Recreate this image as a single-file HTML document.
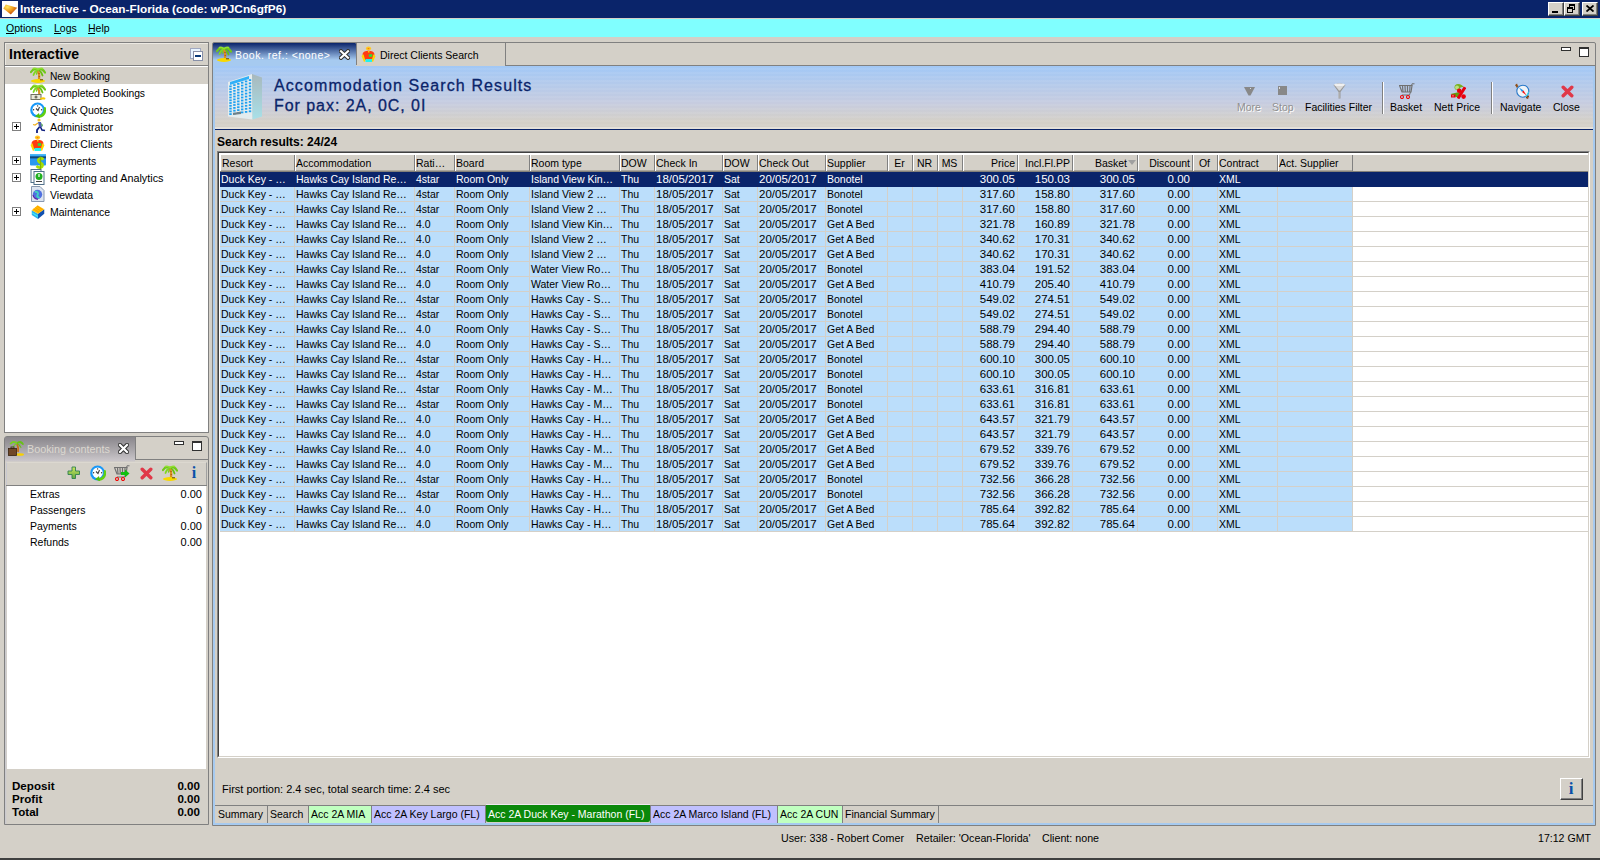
<!DOCTYPE html>
<html><head><meta charset="utf-8"><style>
html,body{margin:0;padding:0;}
body{width:1600px;height:860px;position:relative;overflow:hidden;background:#d4d0c8;font-family:"Liberation Sans", sans-serif;}
body>div,body>svg{position:absolute;}
.t{white-space:nowrap;}
</style></head><body>
<div style="left:0px;top:0px;width:1600px;height:18px;background:#0a246a"></div>
<div style="left:0px;top:18px;width:1600px;height:1px;background:#d4d0c8"></div>
<div style="left:2px;top:1px;width:16px;height:16px;background:#fff"></div>
<svg style="left:2px;top:1px" width="16" height="16" viewBox="0 0 16 16"><defs><radialGradient id="og" cx="0.3" cy="0.25" r="0.85"><stop offset="0" stop-color="#ffe860"/><stop offset="0.45" stop-color="#f0a020"/><stop offset="1" stop-color="#b83800"/></radialGradient></defs><path d="M1.3 7.5 L3.8 3.5 L15.2 6.8 L8.8 13.5 Z" fill="url(#og)"/></svg>
<div class="t" style="left:20px;top:-1px;font-size:11.8px;line-height:20px;color:#fff;font-weight:bold;">Interactive - Ocean-Florida (code: wPJCn6gfP6)</div>
<div style="left:1548px;top:2px;width:16px;height:14px;background:#d4d0c8;border-top:1px solid #fff;border-left:1px solid #fff;border-right:1px solid #404040;border-bottom:1px solid #404040;box-sizing:border-box;box-shadow:inset -1px -1px 0 #808080"></div>
<div style="left:1552px;top:11px;width:6px;height:2px;background:#000"></div>
<div style="left:1564px;top:2px;width:16px;height:14px;background:#d4d0c8;border-top:1px solid #fff;border-left:1px solid #fff;border-right:1px solid #404040;border-bottom:1px solid #404040;box-sizing:border-box;box-shadow:inset -1px -1px 0 #808080"></div>
<div style="left:1569px;top:4px;width:6px;height:6px;border:1px solid #000;border-top-width:2px;box-sizing:border-box"></div><div style="left:1567px;top:7px;width:6px;height:6px;border:1px solid #000;border-top-width:2px;box-sizing:border-box;background:#d4d0c8"></div>
<div style="left:1582px;top:2px;width:16px;height:14px;background:#d4d0c8;border-top:1px solid #fff;border-left:1px solid #fff;border-right:1px solid #404040;border-bottom:1px solid #404040;box-sizing:border-box;box-shadow:inset -1px -1px 0 #808080"></div>
<svg style="left:1586px;top:5px" width="8" height="7" viewBox="0 0 8 7"><path d="M0.5 0.5 L7.5 6.5 M7.5 0.5 L0.5 6.5" stroke="#000" stroke-width="1.8"/></svg>
<div style="left:0px;top:19px;width:1600px;height:18px;background:#80ffff"></div>
<div class="t" style="left:6px;top:18px;font-size:10.5px;line-height:20px;color:#000;">Options</div>
<div style="left:6px;top:33px;width:8px;height:1px;background:#000"></div>
<div class="t" style="left:54px;top:18px;font-size:10.5px;line-height:20px;color:#000;">Logs</div>
<div style="left:54px;top:33px;width:7px;height:1px;background:#000"></div>
<div class="t" style="left:88px;top:18px;font-size:10.5px;line-height:20px;color:#000;">Help</div>
<div style="left:88px;top:33px;width:7px;height:1px;background:#000"></div>
<div style="left:4px;top:42px;width:205px;height:391px;border:1px solid #808080;box-sizing:border-box;background:#d4d0c8"></div>
<div style="left:5px;top:43px;width:203px;height:1px;background:#ece9e2"></div>
<div style="left:5px;top:43px;width:1px;height:22px;background:#ece9e2"></div>
<div style="left:5px;top:65px;width:203px;height:1px;background:#808080"></div>
<div style="left:5px;top:66px;width:203px;height:366px;background:#fff"></div>
<div style="left:5px;top:67px;width:203px;height:17px;background:#d4d0c8"></div>
<div class="t" style="left:9px;top:44px;font-size:14px;line-height:20px;color:#000;font-weight:bold;">Interactive</div>
<div style="left:190px;top:48px;width:11px;height:11px;background:#e8f4ff;border:1px solid #a0a8c0;box-sizing:border-box"></div>
<div style="left:193px;top:51px;width:10px;height:10px;background:#fff;border:1px solid #8890a8;box-sizing:border-box"></div>
<div style="left:195px;top:55px;width:6px;height:2px;background:#0a3a7a"></div>
<div class="t" style="left:50px;top:67px;font-size:10.2px;line-height:20px;color:#000;">New Booking</div>
<svg style="left:30px;top:67px" width="16" height="16" viewBox="0 0 16 16"><g fill="none" stroke-linecap="round"><path d="M8 3 Q4 0.5 1 5" stroke="#70c818" stroke-width="2.2"/><path d="M8 3 Q12 0.5 15 5.5" stroke="#70c818" stroke-width="2.2"/><path d="M8 3.5 Q5 3.5 3.5 8" stroke="#80d820" stroke-width="1.8"/><path d="M8 3.5 Q11 3.5 12.5 8.5" stroke="#68c010" stroke-width="1.8"/><path d="M8 3 Q10 0.5 12.5 1.5" stroke="#90e030" stroke-width="1.6"/><path d="M8 3 Q6 0.5 3.5 1.5" stroke="#90e030" stroke-width="1.6"/><path d="M8 3.5 Q7 5 6.5 7" stroke="#78d020" stroke-width="1.4"/></g><path d="M8 4 Q9.8 7.5 9 13" stroke="#d89020" stroke-width="2.2" fill="none"/><path d="M8.6 6 L9.4 7 M8.8 9 L9.6 10" stroke="#a04810" stroke-width="1"/><ellipse cx="8" cy="14" rx="7" ry="1.9" fill="#f8d800"/><path d="M10 12.8 L13 12.8" stroke="#604010" stroke-width="1"/></svg>
<div class="t" style="left:50px;top:84px;font-size:10.3px;line-height:20px;color:#000;">Completed Bookings</div>
<svg style="left:30px;top:84px" width="16" height="16" viewBox="0 0 16 16"><g fill="none" stroke-linecap="round"><path d="M8 3 Q4 0.5 1 5" stroke="#70c818" stroke-width="2.2"/><path d="M8 3 Q12 0.5 15 5.5" stroke="#70c818" stroke-width="2.2"/><path d="M8 3.5 Q5 3.5 3.5 8" stroke="#80d820" stroke-width="1.8"/><path d="M8 3.5 Q11 3.5 12.5 8.5" stroke="#68c010" stroke-width="1.8"/><path d="M8 3 Q10 0.5 12.5 1.5" stroke="#90e030" stroke-width="1.6"/><path d="M8 3 Q6 0.5 3.5 1.5" stroke="#90e030" stroke-width="1.6"/><path d="M8 3.5 Q7 5 6.5 7" stroke="#78d020" stroke-width="1.4"/></g><path d="M8 4 Q9.8 7 9.3 11" stroke="#d89020" stroke-width="2.2" fill="none"/><rect x="1" y="10.5" width="10" height="5" fill="#e8e8d8" stroke="#707060" stroke-width="1"/><circle cx="6" cy="13" r="1.5" fill="#707060"/><path d="M10 14.5 Q13 12.5 15.5 14 L15 15.5 L10 15.5 Z" fill="#f8c800"/></svg>
<div class="t" style="left:50px;top:100px;font-size:10.5px;line-height:20px;color:#000;">Quick Quotes</div>
<svg style="left:30px;top:102px" width="16" height="16" viewBox="0 0 16 16"><circle cx="7.6" cy="8" r="7.4" fill="#1898f8"/><circle cx="7.6" cy="7.8" r="5.2" fill="#fff"/><circle cx="7.6" cy="3.9" r="0.7" fill="#303030"/><circle cx="3.6" cy="7.8" r="0.7" fill="#303030"/><circle cx="11.6" cy="7.8" r="0.7" fill="#303030"/><path d="M9.5 5 L8 8.5 L6 6.5" stroke="#404040" stroke-width="1.1" fill="none"/><path d="M6 13.5 Q11 14 13.5 10 L14 5 L16 5.5 L16 10 Q15 15 9 16 Z" fill="#60d010"/><path d="M5 14.5 L9 11 L10 16 Z" fill="#50c008"/></svg>
<div class="t" style="left:50px;top:117px;font-size:10.7px;line-height:20px;color:#000;">Administrator</div>
<div style="left:12px;top:122px;width:9px;height:9px;border:1px solid #808080;box-sizing:border-box;background:#fff"></div>
<div style="left:14px;top:126px;width:5px;height:1px;background:#000"></div>
<div style="left:16px;top:124px;width:1px;height:5px;background:#000"></div>
<svg style="left:30px;top:118px" width="16" height="16" viewBox="0 0 16 16"><circle cx="9" cy="2" r="1.6" fill="#f0c020"/><path d="M8 4 L11 4 L12 9 L9 9 Z" fill="#5060b0"/><path d="M11 5 L13 7 L12 9 Z" fill="#40a040"/><path d="M8 5 L5 7 L3 6.5" stroke="#f0b020" stroke-width="1.2" fill="none"/><path d="M9.5 9 L7 12 L7 15" stroke="#102080" stroke-width="1.8" fill="none"/><path d="M10.5 9 L12 12 L15 12.5" stroke="#102080" stroke-width="1.6" fill="none"/></svg>
<div class="t" style="left:50px;top:134px;font-size:10.5px;line-height:20px;color:#000;">Direct Clients</div>
<svg style="left:30px;top:135px" width="16" height="16" viewBox="0 0 16 16"><ellipse cx="7.5" cy="2.4" rx="2.6" ry="2" fill="#ffc820"/><ellipse cx="7.5" cy="2.6" rx="1" ry="0.6" fill="#ff7010"/><path d="M1.5 8 Q2.5 4.8 7.5 4.8 Q12.5 4.8 13.5 8 L12 14 L3 14 Z" fill="#ff3c10"/><path d="M0.5 10 L2.5 8.2 L4.5 15 L3 16 Z M14.5 10 L12.5 8.2 L10.5 15 L12 16 Z" fill="#ffd400"/><rect x="7.8" y="8.2" width="3.4" height="2.6" fill="#28e040"/><rect x="4.5" y="13" width="6.5" height="3" fill="#20f0f0"/><rect x="7" y="5" width="1.5" height="1.5" fill="#ffd000"/></svg>
<div class="t" style="left:50px;top:152px;font-size:10.4px;line-height:20px;color:#000;">Payments</div>
<div style="left:12px;top:156px;width:9px;height:9px;border:1px solid #808080;box-sizing:border-box;background:#fff"></div>
<div style="left:14px;top:160px;width:5px;height:1px;background:#000"></div>
<div style="left:16px;top:158px;width:1px;height:5px;background:#000"></div>
<svg style="left:30px;top:153px" width="16" height="16" viewBox="0 0 16 16"><rect x="0" y="1" width="16" height="11.5" rx="1" fill="#2898f0"/><rect x="0" y="1" width="16" height="1.6" fill="#48b8f8"/><rect x="0" y="3.4" width="16" height="2" fill="#104878"/><path d="M13.5 6.5 Q11.5 4.8 9.5 5.6 Q7.2 6.8 9 9 Q11.5 10 12.5 11.5 Q13 14.5 10 14.6 Q8 14.6 6.5 13" stroke="#a8e000" stroke-width="2.6" fill="none"/><path d="M10.5 3.6 L10.5 16" stroke="#80b800" stroke-width="1.3"/></svg>
<div class="t" style="left:50px;top:168px;font-size:10.8px;line-height:20px;color:#000;">Reporting and Analytics</div>
<div style="left:12px;top:173px;width:9px;height:9px;border:1px solid #808080;box-sizing:border-box;background:#fff"></div>
<div style="left:14px;top:177px;width:5px;height:1px;background:#000"></div>
<div style="left:16px;top:175px;width:1px;height:5px;background:#000"></div>
<svg style="left:30px;top:169px" width="16" height="16" viewBox="0 0 16 16"><rect x="1" y="0.5" width="10" height="13" fill="#fff" stroke="#50708a"/><rect x="4" y="2.5" width="10" height="13" fill="#fff" stroke="#50708a"/><circle cx="9" cy="7.5" r="3.5" fill="#20b020"/><rect x="8.4" y="5" width="1.2" height="3" fill="#fff"/><rect x="6" y="12" width="6" height="1" fill="#404040"/></svg>
<div class="t" style="left:50px;top:185px;font-size:10.5px;line-height:20px;color:#000;">Viewdata</div>
<svg style="left:30px;top:186px" width="16" height="16" viewBox="0 0 16 16"><path d="M1.5 0.5 L10 0.5 L14 4.5 L14 15.5 L1.5 15.5 Z" fill="#dce4f0" stroke="#8898b0"/><circle cx="7.5" cy="8.5" r="4.7" fill="#5070e0"/><path d="M5 6 C7 5 9 7 7.5 9 C6.5 10.5 8.5 12 9.5 11" stroke="#40d0c0" stroke-width="2" fill="none"/><path d="M3 9 C3.5 12 6 13.5 8 13.2" stroke="#6020a0" stroke-width="1.2" fill="none"/></svg>
<div class="t" style="left:50px;top:202px;font-size:10.5px;line-height:20px;color:#000;">Maintenance</div>
<div style="left:12px;top:207px;width:9px;height:9px;border:1px solid #808080;box-sizing:border-box;background:#fff"></div>
<div style="left:14px;top:211px;width:5px;height:1px;background:#000"></div>
<div style="left:16px;top:209px;width:1px;height:5px;background:#000"></div>
<svg style="left:30px;top:204px" width="16" height="16" viewBox="0 1 16 18"><path d="M1 8 L8 12 L8 18 L1 13.5 Z" fill="#30b0e8"/><path d="M8 12 L15 7 L15 12 L8 18 Z" fill="#1050b0"/><path d="M1 8 L7.5 2.5 L15 7 L8 12 Z" fill="#ffc000"/><path d="M3 6.5 L9.5 10.5 M5 5 L11.5 9 M7 3.5 L13.5 7.5" stroke="#ff9000" stroke-width="0.9"/><path d="M1.5 11 L8 15" stroke="#40f0f8" stroke-width="1.2"/></svg>
<div style="left:4px;top:436px;width:205px;height:389px;border:1px solid #808080;box-sizing:border-box;background:#d4d0c8;border-radius:3px 3px 0 0"></div>
<div style="left:5px;top:437px;width:130px;height:25px;background:linear-gradient(#8a878c,#a9a6aa 50%,#cac6ca 95%,#d4d0c8)"></div>
<div style="left:135px;top:437px;width:1px;height:23px;background:#808080"></div>
<div style="left:135px;top:459px;width:73px;height:1px;background:#808080"></div>
<div class="t" style="left:27px;top:439px;font-size:10.8px;line-height:20px;color:#dcd8d0;">Booking contents</div>
<svg style="left:8px;top:440px" width="17" height="17" viewBox="0 0 17 17"><path d="M9 3 C10 6 10.5 9 10 12" stroke="#c87018" stroke-width="1.8" fill="none"/><path d="M9 2 C6 0 3 1 1.5 4 L3 4.5 C4 3 6 2.5 8 3.5 C6 4 5 6 4.5 7.5 L6 7 C6.5 5.5 7.5 4.5 9 4 Z" fill="#78d020"/><path d="M9 2 C12 0 15 1 16 4.5 L14.5 5 C13.5 3.5 12 3 10 3.5 C12 4.5 13 6 13.5 8 L12 7.5 C11.5 6 10.5 4.5 9 4 Z" fill="#68c018"/><ellipse cx="12" cy="14.5" rx="4" ry="1.3" fill="#f8d000"/><rect x="0.5" y="8.5" width="8" height="7" fill="#704828" stroke="#3a2410" stroke-width="0.8"/><rect x="3" y="7" width="3" height="1.5" fill="none" stroke="#3a2410" stroke-width="0.8"/></svg>
<svg style="left:118px;top:443px" width="11" height="11" viewBox="0 0 11 11"><path d="M2 2 L9 9 M9 2 L2 9" stroke="#303030" stroke-width="4.2" stroke-linecap="square"/><path d="M2 2 L9 9 M9 2 L2 9" stroke="#fff" stroke-width="2.2" stroke-linecap="square"/></svg>
<div style="left:174px;top:441px;width:10px;height:4px;border:1px solid #303030;background:#fff;box-sizing:border-box"></div>
<div style="left:192px;top:441px;width:10px;height:10px;border:1px solid #303030;border-top-width:2px;background:#fff;box-sizing:border-box"></div>
<div style="left:6px;top:462px;width:201px;height:23px;background:#d4d0c8;border-left:1px solid #c8c8d0;border-top:1px solid #dcd8d0;border-right:1px solid #a0a0a0;box-sizing:border-box"></div>
<div style="left:6px;top:485px;width:201px;height:1px;background:#808080"></div>
<svg style="left:67px;top:466px" width="14" height="14" viewBox="0 0 14 14"><defs><linearGradient id="pg" x1="0" y1="0" x2="0" y2="1"><stop offset="0" stop-color="#d0e860"/><stop offset="1" stop-color="#60a840"/></linearGradient></defs><path d="M5 1 L8.5 1 L8.5 5 L12.5 5 L12.5 8.5 L8.5 8.5 L8.5 12.5 L5 12.5 L5 8.5 L1 8.5 L1 5 L5 5 Z" fill="url(#pg)" stroke="#308050" stroke-width="0.9"/></svg>
<svg style="left:90px;top:465px" width="16" height="16" viewBox="0 0 16 16"><circle cx="7.6" cy="8" r="7.4" fill="#1898f8"/><circle cx="7.6" cy="7.8" r="5.2" fill="#fff"/><circle cx="7.6" cy="3.9" r="0.7" fill="#303030"/><circle cx="3.6" cy="7.8" r="0.7" fill="#303030"/><circle cx="11.6" cy="7.8" r="0.7" fill="#303030"/><path d="M9.5 5 L8 8.5 L6 6.5" stroke="#404040" stroke-width="1.1" fill="none"/><path d="M6 13.5 Q11 14 13.5 10 L14 5 L16 5.5 L16 10 Q15 15 9 16 Z" fill="#60d010"/><path d="M5 14.5 L9 11 L10 16 Z" fill="#50c008"/></svg>
<svg style="left:114px;top:465px" width="16" height="16" viewBox="0 0 16 16"><path d="M0.5 2.5 L13 2.5 L12 9 L3 9 Z" fill="none" stroke="#707070" stroke-width="1.2"/><path d="M3.5 3 L4 9 M6 3 L6.3 9 M8.5 3 L8.5 9 M11 3 L10.7 9" stroke="#707070" stroke-width="1.2"/><path d="M12.5 3 L13 0.8 L15.5 0.8 M11.5 9 L10.5 12 L3 12" stroke="#707070" stroke-width="1" fill="none"/><circle cx="3" cy="14" r="1.5" fill="none" stroke="#f00000" stroke-width="1.1"/><circle cx="9" cy="14" r="1.5" fill="none" stroke="#f00000" stroke-width="1.1"/><path d="M7 7 L11 7 L11 4.5 L15.5 8.5 L11 12.5 L11 10 L7 10 Z" fill="#10c010"/></svg>
<svg style="left:140px;top:467px" width="13" height="13" viewBox="0 0 13 13"><path d="M2.2 2.2 L10.8 10.8 M10.8 2.2 L2.2 10.8" stroke="#e03848" stroke-width="3.4" stroke-linecap="round"/></svg>
<svg style="left:162px;top:465px" width="16" height="16" viewBox="0 0 16 16"><g fill="none" stroke-linecap="round"><path d="M8 3 Q4 0.5 1 5" stroke="#70c818" stroke-width="2.2"/><path d="M8 3 Q12 0.5 15 5.5" stroke="#70c818" stroke-width="2.2"/><path d="M8 3.5 Q5 3.5 3.5 8" stroke="#80d820" stroke-width="1.8"/><path d="M8 3.5 Q11 3.5 12.5 8.5" stroke="#68c010" stroke-width="1.8"/><path d="M8 3 Q10 0.5 12.5 1.5" stroke="#90e030" stroke-width="1.6"/><path d="M8 3 Q6 0.5 3.5 1.5" stroke="#90e030" stroke-width="1.6"/><path d="M8 3.5 Q7 5 6.5 7" stroke="#78d020" stroke-width="1.4"/></g><path d="M8 4 Q9.8 7.5 9 13" stroke="#d89020" stroke-width="2.2" fill="none"/><path d="M8.6 6 L9.4 7 M8.8 9 L9.6 10" stroke="#a04810" stroke-width="1"/><ellipse cx="8" cy="14" rx="7" ry="1.9" fill="#f8d800"/><path d="M10 12.8 L13 12.8" stroke="#604010" stroke-width="1"/></svg>
<div class="t" style="left:-6px;width:400px;text-align:center;top:463px;font-size:16px;line-height:20px;color:#0a50a8;font-weight:bold;font-family:'Liberation Serif',serif">i</div>
<div style="left:7px;top:486px;width:199px;height:283px;background:#fff"></div>
<div style="left:5px;top:486px;width:2px;height:338px;background:linear-gradient(90deg,#c8c8d0,#d4d0c8)"></div>
<div class="t" style="left:30px;top:484px;font-size:10.5px;line-height:20px;color:#000;">Extras</div>
<div class="t" style="left:-198px;width:400px;text-align:right;top:484px;font-size:11px;line-height:20px;color:#000;">0.00</div>
<div class="t" style="left:30px;top:500px;font-size:10.5px;line-height:20px;color:#000;">Passengers</div>
<div class="t" style="left:-198px;width:400px;text-align:right;top:500px;font-size:11px;line-height:20px;color:#000;">0</div>
<div class="t" style="left:30px;top:516px;font-size:10.5px;line-height:20px;color:#000;">Payments</div>
<div class="t" style="left:-198px;width:400px;text-align:right;top:516px;font-size:11px;line-height:20px;color:#000;">0.00</div>
<div class="t" style="left:30px;top:532px;font-size:10.5px;line-height:20px;color:#000;">Refunds</div>
<div class="t" style="left:-198px;width:400px;text-align:right;top:532px;font-size:11px;line-height:20px;color:#000;">0.00</div>
<div class="t" style="left:12px;top:776px;font-size:11.6px;line-height:20px;color:#000;font-weight:bold;">Deposit</div>
<div class="t" style="left:-200px;width:400px;text-align:right;top:776px;font-size:11.6px;line-height:20px;color:#000;font-weight:bold;">0.00</div>
<div class="t" style="left:12px;top:789px;font-size:11.6px;line-height:20px;color:#000;font-weight:bold;">Profit</div>
<div class="t" style="left:-200px;width:400px;text-align:right;top:789px;font-size:11.6px;line-height:20px;color:#000;font-weight:bold;">0.00</div>
<div class="t" style="left:12px;top:802px;font-size:11.6px;line-height:20px;color:#000;font-weight:bold;">Total</div>
<div class="t" style="left:-200px;width:400px;text-align:right;top:802px;font-size:11.6px;line-height:20px;color:#000;font-weight:bold;">0.00</div>
<div style="left:212px;top:42px;width:1384px;height:784px;border:1px solid #808080;box-sizing:border-box;background:#d4d0c8;border-radius:2px 2px 0 0"></div>
<div style="left:505px;top:65px;width:1090px;height:1px;background:#808080"></div>
<div style="left:356px;top:43px;width:150px;height:22px;background:#d4d0c8;border-left:1px solid #808080;border-right:1px solid #808080;box-sizing:border-box"></div>
<div class="t" style="left:380px;top:45px;font-size:10.5px;line-height:20px;color:#000;">Direct Clients Search</div>
<svg style="left:361px;top:46px" width="16" height="16" viewBox="0 0 16 16"><ellipse cx="7.5" cy="2.4" rx="2.6" ry="2" fill="#ffc820"/><ellipse cx="7.5" cy="2.6" rx="1" ry="0.6" fill="#ff7010"/><path d="M1.5 8 Q2.5 4.8 7.5 4.8 Q12.5 4.8 13.5 8 L12 14 L3 14 Z" fill="#ff3c10"/><path d="M0.5 10 L2.5 8.2 L4.5 15 L3 16 Z M14.5 10 L12.5 8.2 L10.5 15 L12 16 Z" fill="#ffd400"/><rect x="7.8" y="8.2" width="3.4" height="2.6" fill="#28e040"/><rect x="4.5" y="13" width="6.5" height="3" fill="#20f0f0"/><rect x="7" y="5" width="1.5" height="1.5" fill="#ffd000"/></svg>
<div style="left:213px;top:66px;width:1382px;height:759px;border:2px solid #a6caf0;box-sizing:border-box"></div>
<div style="left:215px;top:66px;width:1378px;height:63px;background:linear-gradient(#a2c8f6 0%,#c6cce0 58%,#d4d0c8 88%)"></div>
<div style="left:215px;top:127px;width:1378px;height:2px;background:#e4e0d8"></div>
<div style="left:215px;top:66px;width:1378px;height:63px;background:repeating-linear-gradient(rgba(255,255,255,0) 0px,rgba(255,255,255,0) 2px,rgba(255,255,255,0.06) 2px,rgba(255,255,255,0.06) 4px)"></div>
<div style="left:215px;top:129px;width:1378px;height:1px;background:#0a246a"></div>
<div style="left:213px;top:43px;width:143px;height:23px;background:linear-gradient(#0a246a 0%,#a6caf0 74%,#a6caf0 100%);border-radius:1px 1px 0 0"></div>
<div class="t" style="left:235px;top:45px;font-size:10.5px;line-height:20px;color:#fff;letter-spacing:0.5px">Book. ref.: &lt;none&gt;</div>
<svg style="left:216px;top:46px" width="16" height="16" viewBox="0 0 16 16"><g fill="none" stroke-linecap="round"><path d="M8 3 Q4 0.5 1 5" stroke="#70c818" stroke-width="2.2"/><path d="M8 3 Q12 0.5 15 5.5" stroke="#70c818" stroke-width="2.2"/><path d="M8 3.5 Q5 3.5 3.5 8" stroke="#80d820" stroke-width="1.8"/><path d="M8 3.5 Q11 3.5 12.5 8.5" stroke="#68c010" stroke-width="1.8"/><path d="M8 3 Q10 0.5 12.5 1.5" stroke="#90e030" stroke-width="1.6"/><path d="M8 3 Q6 0.5 3.5 1.5" stroke="#90e030" stroke-width="1.6"/><path d="M8 3.5 Q7 5 6.5 7" stroke="#78d020" stroke-width="1.4"/></g><path d="M8 4 Q9.8 7.5 9 13" stroke="#d89020" stroke-width="2.2" fill="none"/><path d="M8.6 6 L9.4 7 M8.8 9 L9.6 10" stroke="#a04810" stroke-width="1"/><ellipse cx="8" cy="14" rx="7" ry="1.9" fill="#f8d800"/><path d="M10 12.8 L13 12.8" stroke="#604010" stroke-width="1"/></svg>
<svg style="left:339px;top:49px" width="11" height="11" viewBox="0 0 11 10.5"><path d="M2 2 L9 8.5 M9 2 L2 8.5" stroke="#303030" stroke-width="4.2" stroke-linecap="square"/><path d="M2 2 L9 8.5 M9 2 L2 8.5" stroke="#fff" stroke-width="2.2" stroke-linecap="square"/></svg>
<div style="left:1561px;top:47px;width:10px;height:4px;border:1px solid #303030;background:#fff;box-sizing:border-box"></div>
<div style="left:1579px;top:47px;width:10px;height:10px;border:1px solid #303030;border-top-width:2px;background:#fff;box-sizing:border-box"></div>
<svg style="left:227px;top:73px" width="36" height="47" viewBox="0 0 36 47"><defs><linearGradient id="bside" x1="0" y1="0" x2="0" y2="1"><stop offset="0" stop-color="#a8b8bc"/><stop offset="1" stop-color="#a8e0e8"/></linearGradient></defs><path d="M1 9 L25 1 L25.5 46.5 L1 43.5 Z" fill="#e4ecee"/><path d="M25 1 L35 4.5 L35 43.5 L25.5 46.5 Z" fill="url(#bside)"/><path d="M3 9 L22 3 L22 6 L3 12 Z" fill="#30b0f8"/><rect x="2.3" y="12.5" width="2.4" height="1.8" fill="#1ea0f0"/><rect x="2.3" y="15.3" width="2.4" height="1.8" fill="#1ea0f0"/><rect x="2.3" y="18.0" width="2.4" height="1.8" fill="#1ea0f0"/><rect x="2.3" y="20.8" width="2.4" height="1.8" fill="#1ea0f0"/><rect x="2.3" y="23.6" width="2.4" height="1.8" fill="#1ea0f0"/><rect x="2.3" y="26.4" width="2.4" height="1.8" fill="#1ea0f0"/><rect x="2.3" y="29.1" width="2.4" height="1.8" fill="#1ea0f0"/><rect x="2.3" y="31.9" width="2.4" height="1.8" fill="#1ea0f0"/><rect x="2.3" y="34.7" width="2.4" height="1.8" fill="#1ea0f0"/><rect x="2.3" y="37.5" width="2.4" height="1.8" fill="#1ea0f0"/><rect x="2.3" y="40.2" width="2.4" height="1.8" fill="#1ea0f0"/><rect x="6.2" y="11.2" width="2.4" height="1.8" fill="#1ea0f0"/><rect x="6.2" y="14.1" width="2.4" height="1.8" fill="#1ea0f0"/><rect x="6.2" y="16.9" width="2.4" height="1.8" fill="#1ea0f0"/><rect x="6.2" y="19.8" width="2.4" height="1.8" fill="#1ea0f0"/><rect x="6.2" y="22.6" width="2.4" height="1.8" fill="#1ea0f0"/><rect x="6.2" y="25.5" width="2.4" height="1.8" fill="#1ea0f0"/><rect x="6.2" y="28.3" width="2.4" height="1.8" fill="#1ea0f0"/><rect x="6.2" y="31.1" width="2.4" height="1.8" fill="#1ea0f0"/><rect x="6.2" y="34.0" width="2.4" height="1.8" fill="#1ea0f0"/><rect x="6.2" y="36.8" width="2.4" height="1.8" fill="#1ea0f0"/><rect x="6.2" y="39.7" width="2.4" height="1.8" fill="#1ea0f0"/><rect x="10.1" y="10.0" width="2.4" height="1.8" fill="#1ea0f0"/><rect x="10.1" y="12.9" width="2.4" height="1.8" fill="#1ea0f0"/><rect x="10.1" y="15.8" width="2.4" height="1.8" fill="#1ea0f0"/><rect x="10.1" y="18.7" width="2.4" height="1.8" fill="#1ea0f0"/><rect x="10.1" y="21.6" width="2.4" height="1.8" fill="#1ea0f0"/><rect x="10.1" y="24.5" width="2.4" height="1.8" fill="#1ea0f0"/><rect x="10.1" y="27.5" width="2.4" height="1.8" fill="#1ea0f0"/><rect x="10.1" y="30.4" width="2.4" height="1.8" fill="#1ea0f0"/><rect x="10.1" y="33.3" width="2.4" height="1.8" fill="#1ea0f0"/><rect x="10.1" y="36.2" width="2.4" height="1.8" fill="#1ea0f0"/><rect x="10.1" y="39.1" width="2.4" height="1.8" fill="#1ea0f0"/><rect x="14.0" y="8.8" width="2.4" height="1.8" fill="#1ea0f0"/><rect x="14.0" y="11.7" width="2.4" height="1.8" fill="#1ea0f0"/><rect x="14.0" y="14.7" width="2.4" height="1.8" fill="#1ea0f0"/><rect x="14.0" y="17.7" width="2.4" height="1.8" fill="#1ea0f0"/><rect x="14.0" y="20.7" width="2.4" height="1.8" fill="#1ea0f0"/><rect x="14.0" y="23.6" width="2.4" height="1.8" fill="#1ea0f0"/><rect x="14.0" y="26.6" width="2.4" height="1.8" fill="#1ea0f0"/><rect x="14.0" y="29.6" width="2.4" height="1.8" fill="#1ea0f0"/><rect x="14.0" y="32.6" width="2.4" height="1.8" fill="#1ea0f0"/><rect x="14.0" y="35.5" width="2.4" height="1.8" fill="#1ea0f0"/><rect x="14.0" y="38.5" width="2.4" height="1.8" fill="#1ea0f0"/><rect x="17.9" y="7.5" width="2.4" height="1.8" fill="#1ea0f0"/><rect x="17.9" y="10.5" width="2.4" height="1.8" fill="#1ea0f0"/><rect x="17.9" y="13.6" width="2.4" height="1.8" fill="#1ea0f0"/><rect x="17.9" y="16.6" width="2.4" height="1.8" fill="#1ea0f0"/><rect x="17.9" y="19.7" width="2.4" height="1.8" fill="#1ea0f0"/><rect x="17.9" y="22.7" width="2.4" height="1.8" fill="#1ea0f0"/><rect x="17.9" y="25.8" width="2.4" height="1.8" fill="#1ea0f0"/><rect x="17.9" y="28.8" width="2.4" height="1.8" fill="#1ea0f0"/><rect x="17.9" y="31.9" width="2.4" height="1.8" fill="#1ea0f0"/><rect x="17.9" y="34.9" width="2.4" height="1.8" fill="#1ea0f0"/><rect x="17.9" y="38.0" width="2.4" height="1.8" fill="#1ea0f0"/><rect x="21.8" y="6.2" width="2.4" height="1.8" fill="#1ea0f0"/><rect x="21.8" y="9.4" width="2.4" height="1.8" fill="#1ea0f0"/><rect x="21.8" y="12.5" width="2.4" height="1.8" fill="#1ea0f0"/><rect x="21.8" y="15.6" width="2.4" height="1.8" fill="#1ea0f0"/><rect x="21.8" y="18.7" width="2.4" height="1.8" fill="#1ea0f0"/><rect x="21.8" y="21.8" width="2.4" height="1.8" fill="#1ea0f0"/><rect x="21.8" y="24.9" width="2.4" height="1.8" fill="#1ea0f0"/><rect x="21.8" y="28.0" width="2.4" height="1.8" fill="#1ea0f0"/><rect x="21.8" y="31.2" width="2.4" height="1.8" fill="#1ea0f0"/><rect x="21.8" y="34.3" width="2.4" height="1.8" fill="#1ea0f0"/><rect x="21.8" y="37.4" width="2.4" height="1.8" fill="#1ea0f0"/><path d="M6 40 L14 38.5 L14 41 L6 42 Z" fill="#708088"/></svg>
<div class="t" style="left:274px;top:76px;font-size:16px;line-height:20px;color:#0a246a;letter-spacing:1.1px;-webkit-text-stroke:0.3px #0a246a">Accommodation Search Results</div>
<div class="t" style="left:274px;top:96px;font-size:16px;line-height:20px;color:#0a246a;letter-spacing:0.95px;-webkit-text-stroke:0.3px #0a246a">For pax: 2A, 0C, 0I</div>
<div class="t" style="left:1238px;top:98px;font-size:10.5px;line-height:20px;color:#fff;">More</div>
<div class="t" style="left:1237px;top:97px;font-size:10.5px;line-height:20px;color:#909090;">More</div>
<div class="t" style="left:1273px;top:98px;font-size:10.5px;line-height:20px;color:#fff;">Stop</div>
<div class="t" style="left:1272px;top:97px;font-size:10.5px;line-height:20px;color:#909090;">Stop</div>
<div class="t" style="left:1305px;top:97px;font-size:10.5px;line-height:20px;color:#000;">Facilities Filter</div>
<div class="t" style="left:1390px;top:97px;font-size:10.5px;line-height:20px;color:#000;">Basket</div>
<div class="t" style="left:1434px;top:97px;font-size:10.5px;line-height:20px;color:#000;">Nett Price</div>
<div class="t" style="left:1500px;top:97px;font-size:10.5px;line-height:20px;color:#000;">Navigate</div>
<div class="t" style="left:1553px;top:97px;font-size:10.5px;line-height:20px;color:#000;">Close</div>
<svg style="left:1244px;top:86px" width="11" height="10" viewBox="0 0 11 10"><path d="M0 1 L11 1 L6.5 9.5 L4.5 9.5 Z" fill="#888"/><rect x="6" y="2" width="1" height="1" fill="#ddd"/></svg>
<svg style="left:1278px;top:86px" width="9" height="9" viewBox="0 0 9 9"><rect x="0" y="0" width="9" height="9" fill="#888"/><rect x="1" y="1" width="1" height="2" fill="#ddd"/></svg>
<svg style="left:1333px;top:83px" width="13" height="16" viewBox="0 0 13 16"><path d="M0.5 2 C3 0 10 0 12.5 2 L7.5 9 L7.5 15.5 L5.5 15.5 L5.5 9 Z" fill="#989898"/><path d="M1.5 2 C4 1.2 9 1.2 11.5 2 L7 7.5 L6 7.5 Z" fill="#d8d8d8"/><ellipse cx="6.5" cy="1.8" rx="5.5" ry="1.2" fill="#f0f0f0"/><path d="M6 9 L6 15" stroke="#c8c8c8" stroke-width="0.8"/></svg>
<svg style="left:1399px;top:83px" width="16" height="16" viewBox="0 0 16 16"><path d="M0.5 2.5 L13 2.5 L12 9 L3 9 Z" fill="none" stroke="#707070" stroke-width="1.2"/><path d="M3.5 3 L4 9 M6 3 L6.3 9 M8.5 3 L8.5 9 M11 3 L10.7 9" stroke="#707070" stroke-width="1.2"/><path d="M12.5 3 L13 0.8 L15.5 0.8 M11.5 9 L10.5 12 L3 12" stroke="#707070" stroke-width="1" fill="none"/><circle cx="3" cy="14" r="1.5" fill="none" stroke="#f00000" stroke-width="1.1"/><circle cx="9" cy="14" r="1.5" fill="none" stroke="#f00000" stroke-width="1.1"/></svg>
<svg style="left:1450px;top:83px" width="16" height="16" viewBox="0 0 16 16"><path d="M9 6.5 Q11 3 14 4.5 Q12 1 8 1 Q4.5 1 4.5 4.5 Q4.5 7 8 7 Z" fill="#78b020"/><ellipse cx="7" cy="4.5" rx="2" ry="2" fill="#b8e080"/><path d="M0.5 11 L7 9.5 L10 9.5 L9 14 L6 14 Z" fill="#60a010"/><circle cx="9.2" cy="7.8" r="2.3" fill="#e8000e"/><circle cx="13.6" cy="13.6" r="2.3" fill="#e8000e"/><path d="M15 4.2 L8 15.5" stroke="#e8000e" stroke-width="3"/><rect x="1" y="11.5" width="4.5" height="3" fill="#e8000e"/><rect x="2" y="12.5" width="2" height="0.8" fill="#ffa0a0"/></svg>
<svg style="left:1514px;top:83px" width="16" height="16" viewBox="0 0 16 16"><path d="M1.5 2 L4 3.5 M2.5 0.8 L3 4.5" stroke="#905018" stroke-width="1.6"/><path d="M12 14.5 L15 13.5 M13.5 12 L13.5 15.8" stroke="#804010" stroke-width="1.6"/><circle cx="8.8" cy="8.2" r="6" fill="#f0f4f8" stroke="#2878c8" stroke-width="1.1"/><path d="M11.5 13.5 Q14 12 14.5 9" stroke="#30d8f0" stroke-width="1.2" fill="none"/><path d="M5 4.5 L9.5 7.5 L8 9 Z" fill="#1890e8"/><path d="M9.5 7.5 L12.5 12.5 L8 9 Z" fill="#f01010"/></svg>
<svg style="left:1561px;top:85px" width="13" height="13" viewBox="0 0 13 13"><path d="M2.2 2.2 L10.8 10.8 M10.8 2.2 L2.2 10.8" stroke="#e03848" stroke-width="3.4" stroke-linecap="round"/></svg>
<div style="left:1382px;top:82px;width:1px;height:32px;background:#808080"></div>
<div style="left:1383px;top:82px;width:1px;height:32px;background:#fff"></div>
<div style="left:1491px;top:82px;width:1px;height:32px;background:#808080"></div>
<div style="left:1492px;top:82px;width:1px;height:32px;background:#fff"></div>
<div class="t" style="left:217px;top:132px;font-size:12px;line-height:20px;color:#000;font-weight:bold;">Search results: 24/24</div>
<div style="left:217px;top:151px;width:1373px;height:607px;background:#fff;border-top:1px solid #808080;border-left:1px solid #808080;border-right:1px solid #fff;border-bottom:1px solid #fff;box-sizing:border-box"></div>
<div style="left:218px;top:152px;width:1371px;height:605px;border-top:1px solid #404040;border-left:1px solid #404040;border-right:1px solid #d4d0c8;border-bottom:1px solid #d4d0c8;box-sizing:border-box"></div>
<div style="left:220px;top:155px;width:1368px;height:16px;background:#d4d0c8"></div>
<div style="left:220px;top:170px;width:1368px;height:1px;background:#aaa69c"></div>
<div style="left:220px;top:171px;width:1368px;height:1px;background:#84817a"></div>
<div style="left:294px;top:155px;width:1px;height:16px;background:#808080"></div>
<div style="left:295px;top:155px;width:1px;height:16px;background:#fff"></div>
<div class="t" style="left:222px;top:153px;font-size:10.5px;line-height:20px;color:#000;">Resort</div>
<div style="left:414px;top:155px;width:1px;height:16px;background:#808080"></div>
<div style="left:415px;top:155px;width:1px;height:16px;background:#fff"></div>
<div class="t" style="left:296px;top:153px;font-size:10.5px;line-height:20px;color:#000;">Accommodation</div>
<div style="left:454px;top:155px;width:1px;height:16px;background:#808080"></div>
<div style="left:455px;top:155px;width:1px;height:16px;background:#fff"></div>
<div class="t" style="left:416px;top:153px;font-size:10.5px;line-height:20px;color:#000;">Rati…</div>
<div style="left:529px;top:155px;width:1px;height:16px;background:#808080"></div>
<div style="left:530px;top:155px;width:1px;height:16px;background:#fff"></div>
<div class="t" style="left:456px;top:153px;font-size:10.5px;line-height:20px;color:#000;">Board</div>
<div style="left:619px;top:155px;width:1px;height:16px;background:#808080"></div>
<div style="left:620px;top:155px;width:1px;height:16px;background:#fff"></div>
<div class="t" style="left:531px;top:153px;font-size:10.5px;line-height:20px;color:#000;">Room type</div>
<div style="left:654px;top:155px;width:1px;height:16px;background:#808080"></div>
<div style="left:655px;top:155px;width:1px;height:16px;background:#fff"></div>
<div class="t" style="left:621px;top:153px;font-size:10.5px;line-height:20px;color:#000;">DOW</div>
<div style="left:722px;top:155px;width:1px;height:16px;background:#808080"></div>
<div style="left:723px;top:155px;width:1px;height:16px;background:#fff"></div>
<div class="t" style="left:656px;top:153px;font-size:10.5px;line-height:20px;color:#000;">Check In</div>
<div style="left:757px;top:155px;width:1px;height:16px;background:#808080"></div>
<div style="left:758px;top:155px;width:1px;height:16px;background:#fff"></div>
<div class="t" style="left:724px;top:153px;font-size:10.5px;line-height:20px;color:#000;">DOW</div>
<div style="left:825px;top:155px;width:1px;height:16px;background:#808080"></div>
<div style="left:826px;top:155px;width:1px;height:16px;background:#fff"></div>
<div class="t" style="left:759px;top:153px;font-size:10.5px;line-height:20px;color:#000;">Check Out</div>
<div style="left:887px;top:155px;width:1px;height:16px;background:#808080"></div>
<div style="left:888px;top:155px;width:1px;height:16px;background:#fff"></div>
<div class="t" style="left:827px;top:153px;font-size:10.5px;line-height:20px;color:#000;">Supplier</div>
<div style="left:912px;top:155px;width:1px;height:16px;background:#808080"></div>
<div style="left:913px;top:155px;width:1px;height:16px;background:#fff"></div>
<div class="t" style="left:699.5px;width:400px;text-align:center;top:153px;font-size:10.5px;line-height:20px;color:#000;">Er</div>
<div style="left:937px;top:155px;width:1px;height:16px;background:#808080"></div>
<div style="left:938px;top:155px;width:1px;height:16px;background:#fff"></div>
<div class="t" style="left:724.5px;width:400px;text-align:center;top:153px;font-size:10.5px;line-height:20px;color:#000;">NR</div>
<div style="left:962px;top:155px;width:1px;height:16px;background:#808080"></div>
<div style="left:963px;top:155px;width:1px;height:16px;background:#fff"></div>
<div class="t" style="left:749.5px;width:400px;text-align:center;top:153px;font-size:10.5px;line-height:20px;color:#000;">MS</div>
<div style="left:1017px;top:155px;width:1px;height:16px;background:#808080"></div>
<div style="left:1018px;top:155px;width:1px;height:16px;background:#fff"></div>
<div class="t" style="left:615px;width:400px;text-align:right;top:153px;font-size:10.5px;line-height:20px;color:#000;">Price</div>
<div style="left:1072px;top:155px;width:1px;height:16px;background:#808080"></div>
<div style="left:1073px;top:155px;width:1px;height:16px;background:#fff"></div>
<div class="t" style="left:670px;width:400px;text-align:right;top:153px;font-size:10.5px;line-height:20px;color:#000;">Incl.Fl.PP</div>
<div style="left:1137px;top:155px;width:1px;height:16px;background:#808080"></div>
<div style="left:1138px;top:155px;width:1px;height:16px;background:#fff"></div>
<div class="t" style="left:727px;width:400px;text-align:right;top:153px;font-size:10.5px;line-height:20px;color:#000;">Basket</div>
<svg style="left:1128px;top:160px" width="8" height="5" viewBox="0 0 8 5"><path d="M0 0 L8 0 L4 5 Z" fill="#a0a0a0"/></svg>
<div style="left:1192px;top:155px;width:1px;height:16px;background:#808080"></div>
<div style="left:1193px;top:155px;width:1px;height:16px;background:#fff"></div>
<div class="t" style="left:790px;width:400px;text-align:right;top:153px;font-size:10.5px;line-height:20px;color:#000;">Discount</div>
<div style="left:1217px;top:155px;width:1px;height:16px;background:#808080"></div>
<div style="left:1218px;top:155px;width:1px;height:16px;background:#fff"></div>
<div class="t" style="left:1004.5px;width:400px;text-align:center;top:153px;font-size:10.5px;line-height:20px;color:#000;">Of</div>
<div style="left:1277px;top:155px;width:1px;height:16px;background:#808080"></div>
<div style="left:1278px;top:155px;width:1px;height:16px;background:#fff"></div>
<div class="t" style="left:1219px;top:153px;font-size:10.5px;line-height:20px;color:#000;">Contract</div>
<div style="left:1352px;top:155px;width:1px;height:16px;background:#808080"></div>
<div style="left:1353px;top:155px;width:1px;height:16px;background:#fff"></div>
<div class="t" style="left:1279px;top:153px;font-size:10.5px;line-height:20px;color:#000;">Act. Supplier</div>
<div style="left:220px;top:155px;width:1px;height:16px;background:#fff"></div>
<div style="left:1353px;top:155px;width:235px;height:16px;background:#d4d0c8"></div>
<div style="left:220px;top:172px;width:1133px;height:360px;background:#bbdefb"></div>
<div style="left:220px;top:186px;width:1368px;height:1px;background:#d4d0c8"></div>
<div style="left:220px;top:201px;width:1368px;height:1px;background:#d4d0c8"></div>
<div style="left:220px;top:216px;width:1368px;height:1px;background:#d4d0c8"></div>
<div style="left:220px;top:231px;width:1368px;height:1px;background:#d4d0c8"></div>
<div style="left:220px;top:246px;width:1368px;height:1px;background:#d4d0c8"></div>
<div style="left:220px;top:261px;width:1368px;height:1px;background:#d4d0c8"></div>
<div style="left:220px;top:276px;width:1368px;height:1px;background:#d4d0c8"></div>
<div style="left:220px;top:291px;width:1368px;height:1px;background:#d4d0c8"></div>
<div style="left:220px;top:306px;width:1368px;height:1px;background:#d4d0c8"></div>
<div style="left:220px;top:321px;width:1368px;height:1px;background:#d4d0c8"></div>
<div style="left:220px;top:336px;width:1368px;height:1px;background:#d4d0c8"></div>
<div style="left:220px;top:351px;width:1368px;height:1px;background:#d4d0c8"></div>
<div style="left:220px;top:366px;width:1368px;height:1px;background:#d4d0c8"></div>
<div style="left:220px;top:381px;width:1368px;height:1px;background:#d4d0c8"></div>
<div style="left:220px;top:396px;width:1368px;height:1px;background:#d4d0c8"></div>
<div style="left:220px;top:411px;width:1368px;height:1px;background:#d4d0c8"></div>
<div style="left:220px;top:426px;width:1368px;height:1px;background:#d4d0c8"></div>
<div style="left:220px;top:441px;width:1368px;height:1px;background:#d4d0c8"></div>
<div style="left:220px;top:456px;width:1368px;height:1px;background:#d4d0c8"></div>
<div style="left:220px;top:471px;width:1368px;height:1px;background:#d4d0c8"></div>
<div style="left:220px;top:486px;width:1368px;height:1px;background:#d4d0c8"></div>
<div style="left:220px;top:501px;width:1368px;height:1px;background:#d4d0c8"></div>
<div style="left:220px;top:516px;width:1368px;height:1px;background:#d4d0c8"></div>
<div style="left:220px;top:531px;width:1368px;height:1px;background:#d4d0c8"></div>
<div style="left:294px;top:172px;width:1px;height:360px;background:#d4d0c8"></div>
<div style="left:414px;top:172px;width:1px;height:360px;background:#d4d0c8"></div>
<div style="left:454px;top:172px;width:1px;height:360px;background:#d4d0c8"></div>
<div style="left:529px;top:172px;width:1px;height:360px;background:#d4d0c8"></div>
<div style="left:619px;top:172px;width:1px;height:360px;background:#d4d0c8"></div>
<div style="left:654px;top:172px;width:1px;height:360px;background:#d4d0c8"></div>
<div style="left:722px;top:172px;width:1px;height:360px;background:#d4d0c8"></div>
<div style="left:757px;top:172px;width:1px;height:360px;background:#d4d0c8"></div>
<div style="left:825px;top:172px;width:1px;height:360px;background:#d4d0c8"></div>
<div style="left:887px;top:172px;width:1px;height:360px;background:#d4d0c8"></div>
<div style="left:912px;top:172px;width:1px;height:360px;background:#d4d0c8"></div>
<div style="left:937px;top:172px;width:1px;height:360px;background:#d4d0c8"></div>
<div style="left:962px;top:172px;width:1px;height:360px;background:#d4d0c8"></div>
<div style="left:1017px;top:172px;width:1px;height:360px;background:#d4d0c8"></div>
<div style="left:1072px;top:172px;width:1px;height:360px;background:#d4d0c8"></div>
<div style="left:1137px;top:172px;width:1px;height:360px;background:#d4d0c8"></div>
<div style="left:1192px;top:172px;width:1px;height:360px;background:#d4d0c8"></div>
<div style="left:1217px;top:172px;width:1px;height:360px;background:#d4d0c8"></div>
<div style="left:1277px;top:172px;width:1px;height:360px;background:#d4d0c8"></div>
<div style="left:1352px;top:172px;width:1px;height:360px;background:#d4d0c8"></div>
<div style="left:220px;top:172px;width:1368px;height:15px;background:#0a246a"></div>
<div class="t" style="left:221px;top:169px;font-size:10.5px;line-height:20px;color:#fff;">Duck Key - …</div>
<div class="t" style="left:296px;top:169px;font-size:10.5px;line-height:20px;color:#fff;">Hawks Cay Island Re…</div>
<div class="t" style="left:416px;top:169px;font-size:10.5px;line-height:20px;color:#fff;">4star</div>
<div class="t" style="left:456px;top:169px;font-size:10.5px;line-height:20px;color:#fff;">Room Only</div>
<div class="t" style="left:531px;top:169px;font-size:10.5px;line-height:20px;color:#fff;">Island View Kin…</div>
<div class="t" style="left:621px;top:169px;font-size:10.5px;line-height:20px;color:#fff;">Thu</div>
<div class="t" style="left:656px;top:169px;font-size:11.5px;line-height:20px;color:#fff;">18/05/2017</div>
<div class="t" style="left:724px;top:169px;font-size:10.5px;line-height:20px;color:#fff;">Sat</div>
<div class="t" style="left:759px;top:169px;font-size:11.5px;line-height:20px;color:#fff;">20/05/2017</div>
<div class="t" style="left:827px;top:169px;font-size:10.5px;line-height:20px;color:#fff;">Bonotel</div>
<div class="t" style="left:615px;width:400px;text-align:right;top:169px;font-size:11.5px;line-height:20px;color:#fff;">300.05</div>
<div class="t" style="left:670px;width:400px;text-align:right;top:169px;font-size:11.5px;line-height:20px;color:#fff;">150.03</div>
<div class="t" style="left:735px;width:400px;text-align:right;top:169px;font-size:11.5px;line-height:20px;color:#fff;">300.05</div>
<div class="t" style="left:790px;width:400px;text-align:right;top:169px;font-size:11.5px;line-height:20px;color:#fff;">0.00</div>
<div class="t" style="left:1219px;top:169px;font-size:10.5px;line-height:20px;color:#fff;">XML</div>
<div class="t" style="left:221px;top:184px;font-size:10.5px;line-height:20px;color:#000;">Duck Key - …</div>
<div class="t" style="left:296px;top:184px;font-size:10.5px;line-height:20px;color:#000;">Hawks Cay Island Re…</div>
<div class="t" style="left:416px;top:184px;font-size:10.5px;line-height:20px;color:#000;">4star</div>
<div class="t" style="left:456px;top:184px;font-size:10.5px;line-height:20px;color:#000;">Room Only</div>
<div class="t" style="left:531px;top:184px;font-size:10.5px;line-height:20px;color:#000;">Island View 2 …</div>
<div class="t" style="left:621px;top:184px;font-size:10.5px;line-height:20px;color:#000;">Thu</div>
<div class="t" style="left:656px;top:184px;font-size:11.5px;line-height:20px;color:#000;">18/05/2017</div>
<div class="t" style="left:724px;top:184px;font-size:10.5px;line-height:20px;color:#000;">Sat</div>
<div class="t" style="left:759px;top:184px;font-size:11.5px;line-height:20px;color:#000;">20/05/2017</div>
<div class="t" style="left:827px;top:184px;font-size:10.5px;line-height:20px;color:#000;">Bonotel</div>
<div class="t" style="left:615px;width:400px;text-align:right;top:184px;font-size:11.5px;line-height:20px;color:#000;">317.60</div>
<div class="t" style="left:670px;width:400px;text-align:right;top:184px;font-size:11.5px;line-height:20px;color:#000;">158.80</div>
<div class="t" style="left:735px;width:400px;text-align:right;top:184px;font-size:11.5px;line-height:20px;color:#000;">317.60</div>
<div class="t" style="left:790px;width:400px;text-align:right;top:184px;font-size:11.5px;line-height:20px;color:#000;">0.00</div>
<div class="t" style="left:1219px;top:184px;font-size:10.5px;line-height:20px;color:#000;">XML</div>
<div class="t" style="left:221px;top:199px;font-size:10.5px;line-height:20px;color:#000;">Duck Key - …</div>
<div class="t" style="left:296px;top:199px;font-size:10.5px;line-height:20px;color:#000;">Hawks Cay Island Re…</div>
<div class="t" style="left:416px;top:199px;font-size:10.5px;line-height:20px;color:#000;">4star</div>
<div class="t" style="left:456px;top:199px;font-size:10.5px;line-height:20px;color:#000;">Room Only</div>
<div class="t" style="left:531px;top:199px;font-size:10.5px;line-height:20px;color:#000;">Island View 2 …</div>
<div class="t" style="left:621px;top:199px;font-size:10.5px;line-height:20px;color:#000;">Thu</div>
<div class="t" style="left:656px;top:199px;font-size:11.5px;line-height:20px;color:#000;">18/05/2017</div>
<div class="t" style="left:724px;top:199px;font-size:10.5px;line-height:20px;color:#000;">Sat</div>
<div class="t" style="left:759px;top:199px;font-size:11.5px;line-height:20px;color:#000;">20/05/2017</div>
<div class="t" style="left:827px;top:199px;font-size:10.5px;line-height:20px;color:#000;">Bonotel</div>
<div class="t" style="left:615px;width:400px;text-align:right;top:199px;font-size:11.5px;line-height:20px;color:#000;">317.60</div>
<div class="t" style="left:670px;width:400px;text-align:right;top:199px;font-size:11.5px;line-height:20px;color:#000;">158.80</div>
<div class="t" style="left:735px;width:400px;text-align:right;top:199px;font-size:11.5px;line-height:20px;color:#000;">317.60</div>
<div class="t" style="left:790px;width:400px;text-align:right;top:199px;font-size:11.5px;line-height:20px;color:#000;">0.00</div>
<div class="t" style="left:1219px;top:199px;font-size:10.5px;line-height:20px;color:#000;">XML</div>
<div class="t" style="left:221px;top:214px;font-size:10.5px;line-height:20px;color:#000;">Duck Key - …</div>
<div class="t" style="left:296px;top:214px;font-size:10.5px;line-height:20px;color:#000;">Hawks Cay Island Re…</div>
<div class="t" style="left:416px;top:214px;font-size:10.5px;line-height:20px;color:#000;">4.0</div>
<div class="t" style="left:456px;top:214px;font-size:10.5px;line-height:20px;color:#000;">Room Only</div>
<div class="t" style="left:531px;top:214px;font-size:10.5px;line-height:20px;color:#000;">Island View Kin…</div>
<div class="t" style="left:621px;top:214px;font-size:10.5px;line-height:20px;color:#000;">Thu</div>
<div class="t" style="left:656px;top:214px;font-size:11.5px;line-height:20px;color:#000;">18/05/2017</div>
<div class="t" style="left:724px;top:214px;font-size:10.5px;line-height:20px;color:#000;">Sat</div>
<div class="t" style="left:759px;top:214px;font-size:11.5px;line-height:20px;color:#000;">20/05/2017</div>
<div class="t" style="left:827px;top:214px;font-size:10.5px;line-height:20px;color:#000;">Get A Bed</div>
<div class="t" style="left:615px;width:400px;text-align:right;top:214px;font-size:11.5px;line-height:20px;color:#000;">321.78</div>
<div class="t" style="left:670px;width:400px;text-align:right;top:214px;font-size:11.5px;line-height:20px;color:#000;">160.89</div>
<div class="t" style="left:735px;width:400px;text-align:right;top:214px;font-size:11.5px;line-height:20px;color:#000;">321.78</div>
<div class="t" style="left:790px;width:400px;text-align:right;top:214px;font-size:11.5px;line-height:20px;color:#000;">0.00</div>
<div class="t" style="left:1219px;top:214px;font-size:10.5px;line-height:20px;color:#000;">XML</div>
<div class="t" style="left:221px;top:229px;font-size:10.5px;line-height:20px;color:#000;">Duck Key - …</div>
<div class="t" style="left:296px;top:229px;font-size:10.5px;line-height:20px;color:#000;">Hawks Cay Island Re…</div>
<div class="t" style="left:416px;top:229px;font-size:10.5px;line-height:20px;color:#000;">4.0</div>
<div class="t" style="left:456px;top:229px;font-size:10.5px;line-height:20px;color:#000;">Room Only</div>
<div class="t" style="left:531px;top:229px;font-size:10.5px;line-height:20px;color:#000;">Island View 2 …</div>
<div class="t" style="left:621px;top:229px;font-size:10.5px;line-height:20px;color:#000;">Thu</div>
<div class="t" style="left:656px;top:229px;font-size:11.5px;line-height:20px;color:#000;">18/05/2017</div>
<div class="t" style="left:724px;top:229px;font-size:10.5px;line-height:20px;color:#000;">Sat</div>
<div class="t" style="left:759px;top:229px;font-size:11.5px;line-height:20px;color:#000;">20/05/2017</div>
<div class="t" style="left:827px;top:229px;font-size:10.5px;line-height:20px;color:#000;">Get A Bed</div>
<div class="t" style="left:615px;width:400px;text-align:right;top:229px;font-size:11.5px;line-height:20px;color:#000;">340.62</div>
<div class="t" style="left:670px;width:400px;text-align:right;top:229px;font-size:11.5px;line-height:20px;color:#000;">170.31</div>
<div class="t" style="left:735px;width:400px;text-align:right;top:229px;font-size:11.5px;line-height:20px;color:#000;">340.62</div>
<div class="t" style="left:790px;width:400px;text-align:right;top:229px;font-size:11.5px;line-height:20px;color:#000;">0.00</div>
<div class="t" style="left:1219px;top:229px;font-size:10.5px;line-height:20px;color:#000;">XML</div>
<div class="t" style="left:221px;top:244px;font-size:10.5px;line-height:20px;color:#000;">Duck Key - …</div>
<div class="t" style="left:296px;top:244px;font-size:10.5px;line-height:20px;color:#000;">Hawks Cay Island Re…</div>
<div class="t" style="left:416px;top:244px;font-size:10.5px;line-height:20px;color:#000;">4.0</div>
<div class="t" style="left:456px;top:244px;font-size:10.5px;line-height:20px;color:#000;">Room Only</div>
<div class="t" style="left:531px;top:244px;font-size:10.5px;line-height:20px;color:#000;">Island View 2 …</div>
<div class="t" style="left:621px;top:244px;font-size:10.5px;line-height:20px;color:#000;">Thu</div>
<div class="t" style="left:656px;top:244px;font-size:11.5px;line-height:20px;color:#000;">18/05/2017</div>
<div class="t" style="left:724px;top:244px;font-size:10.5px;line-height:20px;color:#000;">Sat</div>
<div class="t" style="left:759px;top:244px;font-size:11.5px;line-height:20px;color:#000;">20/05/2017</div>
<div class="t" style="left:827px;top:244px;font-size:10.5px;line-height:20px;color:#000;">Get A Bed</div>
<div class="t" style="left:615px;width:400px;text-align:right;top:244px;font-size:11.5px;line-height:20px;color:#000;">340.62</div>
<div class="t" style="left:670px;width:400px;text-align:right;top:244px;font-size:11.5px;line-height:20px;color:#000;">170.31</div>
<div class="t" style="left:735px;width:400px;text-align:right;top:244px;font-size:11.5px;line-height:20px;color:#000;">340.62</div>
<div class="t" style="left:790px;width:400px;text-align:right;top:244px;font-size:11.5px;line-height:20px;color:#000;">0.00</div>
<div class="t" style="left:1219px;top:244px;font-size:10.5px;line-height:20px;color:#000;">XML</div>
<div class="t" style="left:221px;top:259px;font-size:10.5px;line-height:20px;color:#000;">Duck Key - …</div>
<div class="t" style="left:296px;top:259px;font-size:10.5px;line-height:20px;color:#000;">Hawks Cay Island Re…</div>
<div class="t" style="left:416px;top:259px;font-size:10.5px;line-height:20px;color:#000;">4star</div>
<div class="t" style="left:456px;top:259px;font-size:10.5px;line-height:20px;color:#000;">Room Only</div>
<div class="t" style="left:531px;top:259px;font-size:10.5px;line-height:20px;color:#000;">Water View Ro…</div>
<div class="t" style="left:621px;top:259px;font-size:10.5px;line-height:20px;color:#000;">Thu</div>
<div class="t" style="left:656px;top:259px;font-size:11.5px;line-height:20px;color:#000;">18/05/2017</div>
<div class="t" style="left:724px;top:259px;font-size:10.5px;line-height:20px;color:#000;">Sat</div>
<div class="t" style="left:759px;top:259px;font-size:11.5px;line-height:20px;color:#000;">20/05/2017</div>
<div class="t" style="left:827px;top:259px;font-size:10.5px;line-height:20px;color:#000;">Bonotel</div>
<div class="t" style="left:615px;width:400px;text-align:right;top:259px;font-size:11.5px;line-height:20px;color:#000;">383.04</div>
<div class="t" style="left:670px;width:400px;text-align:right;top:259px;font-size:11.5px;line-height:20px;color:#000;">191.52</div>
<div class="t" style="left:735px;width:400px;text-align:right;top:259px;font-size:11.5px;line-height:20px;color:#000;">383.04</div>
<div class="t" style="left:790px;width:400px;text-align:right;top:259px;font-size:11.5px;line-height:20px;color:#000;">0.00</div>
<div class="t" style="left:1219px;top:259px;font-size:10.5px;line-height:20px;color:#000;">XML</div>
<div class="t" style="left:221px;top:274px;font-size:10.5px;line-height:20px;color:#000;">Duck Key - …</div>
<div class="t" style="left:296px;top:274px;font-size:10.5px;line-height:20px;color:#000;">Hawks Cay Island Re…</div>
<div class="t" style="left:416px;top:274px;font-size:10.5px;line-height:20px;color:#000;">4.0</div>
<div class="t" style="left:456px;top:274px;font-size:10.5px;line-height:20px;color:#000;">Room Only</div>
<div class="t" style="left:531px;top:274px;font-size:10.5px;line-height:20px;color:#000;">Water View Ro…</div>
<div class="t" style="left:621px;top:274px;font-size:10.5px;line-height:20px;color:#000;">Thu</div>
<div class="t" style="left:656px;top:274px;font-size:11.5px;line-height:20px;color:#000;">18/05/2017</div>
<div class="t" style="left:724px;top:274px;font-size:10.5px;line-height:20px;color:#000;">Sat</div>
<div class="t" style="left:759px;top:274px;font-size:11.5px;line-height:20px;color:#000;">20/05/2017</div>
<div class="t" style="left:827px;top:274px;font-size:10.5px;line-height:20px;color:#000;">Get A Bed</div>
<div class="t" style="left:615px;width:400px;text-align:right;top:274px;font-size:11.5px;line-height:20px;color:#000;">410.79</div>
<div class="t" style="left:670px;width:400px;text-align:right;top:274px;font-size:11.5px;line-height:20px;color:#000;">205.40</div>
<div class="t" style="left:735px;width:400px;text-align:right;top:274px;font-size:11.5px;line-height:20px;color:#000;">410.79</div>
<div class="t" style="left:790px;width:400px;text-align:right;top:274px;font-size:11.5px;line-height:20px;color:#000;">0.00</div>
<div class="t" style="left:1219px;top:274px;font-size:10.5px;line-height:20px;color:#000;">XML</div>
<div class="t" style="left:221px;top:289px;font-size:10.5px;line-height:20px;color:#000;">Duck Key - …</div>
<div class="t" style="left:296px;top:289px;font-size:10.5px;line-height:20px;color:#000;">Hawks Cay Island Re…</div>
<div class="t" style="left:416px;top:289px;font-size:10.5px;line-height:20px;color:#000;">4star</div>
<div class="t" style="left:456px;top:289px;font-size:10.5px;line-height:20px;color:#000;">Room Only</div>
<div class="t" style="left:531px;top:289px;font-size:10.5px;line-height:20px;color:#000;">Hawks Cay - S…</div>
<div class="t" style="left:621px;top:289px;font-size:10.5px;line-height:20px;color:#000;">Thu</div>
<div class="t" style="left:656px;top:289px;font-size:11.5px;line-height:20px;color:#000;">18/05/2017</div>
<div class="t" style="left:724px;top:289px;font-size:10.5px;line-height:20px;color:#000;">Sat</div>
<div class="t" style="left:759px;top:289px;font-size:11.5px;line-height:20px;color:#000;">20/05/2017</div>
<div class="t" style="left:827px;top:289px;font-size:10.5px;line-height:20px;color:#000;">Bonotel</div>
<div class="t" style="left:615px;width:400px;text-align:right;top:289px;font-size:11.5px;line-height:20px;color:#000;">549.02</div>
<div class="t" style="left:670px;width:400px;text-align:right;top:289px;font-size:11.5px;line-height:20px;color:#000;">274.51</div>
<div class="t" style="left:735px;width:400px;text-align:right;top:289px;font-size:11.5px;line-height:20px;color:#000;">549.02</div>
<div class="t" style="left:790px;width:400px;text-align:right;top:289px;font-size:11.5px;line-height:20px;color:#000;">0.00</div>
<div class="t" style="left:1219px;top:289px;font-size:10.5px;line-height:20px;color:#000;">XML</div>
<div class="t" style="left:221px;top:304px;font-size:10.5px;line-height:20px;color:#000;">Duck Key - …</div>
<div class="t" style="left:296px;top:304px;font-size:10.5px;line-height:20px;color:#000;">Hawks Cay Island Re…</div>
<div class="t" style="left:416px;top:304px;font-size:10.5px;line-height:20px;color:#000;">4star</div>
<div class="t" style="left:456px;top:304px;font-size:10.5px;line-height:20px;color:#000;">Room Only</div>
<div class="t" style="left:531px;top:304px;font-size:10.5px;line-height:20px;color:#000;">Hawks Cay - S…</div>
<div class="t" style="left:621px;top:304px;font-size:10.5px;line-height:20px;color:#000;">Thu</div>
<div class="t" style="left:656px;top:304px;font-size:11.5px;line-height:20px;color:#000;">18/05/2017</div>
<div class="t" style="left:724px;top:304px;font-size:10.5px;line-height:20px;color:#000;">Sat</div>
<div class="t" style="left:759px;top:304px;font-size:11.5px;line-height:20px;color:#000;">20/05/2017</div>
<div class="t" style="left:827px;top:304px;font-size:10.5px;line-height:20px;color:#000;">Bonotel</div>
<div class="t" style="left:615px;width:400px;text-align:right;top:304px;font-size:11.5px;line-height:20px;color:#000;">549.02</div>
<div class="t" style="left:670px;width:400px;text-align:right;top:304px;font-size:11.5px;line-height:20px;color:#000;">274.51</div>
<div class="t" style="left:735px;width:400px;text-align:right;top:304px;font-size:11.5px;line-height:20px;color:#000;">549.02</div>
<div class="t" style="left:790px;width:400px;text-align:right;top:304px;font-size:11.5px;line-height:20px;color:#000;">0.00</div>
<div class="t" style="left:1219px;top:304px;font-size:10.5px;line-height:20px;color:#000;">XML</div>
<div class="t" style="left:221px;top:319px;font-size:10.5px;line-height:20px;color:#000;">Duck Key - …</div>
<div class="t" style="left:296px;top:319px;font-size:10.5px;line-height:20px;color:#000;">Hawks Cay Island Re…</div>
<div class="t" style="left:416px;top:319px;font-size:10.5px;line-height:20px;color:#000;">4.0</div>
<div class="t" style="left:456px;top:319px;font-size:10.5px;line-height:20px;color:#000;">Room Only</div>
<div class="t" style="left:531px;top:319px;font-size:10.5px;line-height:20px;color:#000;">Hawks Cay - S…</div>
<div class="t" style="left:621px;top:319px;font-size:10.5px;line-height:20px;color:#000;">Thu</div>
<div class="t" style="left:656px;top:319px;font-size:11.5px;line-height:20px;color:#000;">18/05/2017</div>
<div class="t" style="left:724px;top:319px;font-size:10.5px;line-height:20px;color:#000;">Sat</div>
<div class="t" style="left:759px;top:319px;font-size:11.5px;line-height:20px;color:#000;">20/05/2017</div>
<div class="t" style="left:827px;top:319px;font-size:10.5px;line-height:20px;color:#000;">Get A Bed</div>
<div class="t" style="left:615px;width:400px;text-align:right;top:319px;font-size:11.5px;line-height:20px;color:#000;">588.79</div>
<div class="t" style="left:670px;width:400px;text-align:right;top:319px;font-size:11.5px;line-height:20px;color:#000;">294.40</div>
<div class="t" style="left:735px;width:400px;text-align:right;top:319px;font-size:11.5px;line-height:20px;color:#000;">588.79</div>
<div class="t" style="left:790px;width:400px;text-align:right;top:319px;font-size:11.5px;line-height:20px;color:#000;">0.00</div>
<div class="t" style="left:1219px;top:319px;font-size:10.5px;line-height:20px;color:#000;">XML</div>
<div class="t" style="left:221px;top:334px;font-size:10.5px;line-height:20px;color:#000;">Duck Key - …</div>
<div class="t" style="left:296px;top:334px;font-size:10.5px;line-height:20px;color:#000;">Hawks Cay Island Re…</div>
<div class="t" style="left:416px;top:334px;font-size:10.5px;line-height:20px;color:#000;">4.0</div>
<div class="t" style="left:456px;top:334px;font-size:10.5px;line-height:20px;color:#000;">Room Only</div>
<div class="t" style="left:531px;top:334px;font-size:10.5px;line-height:20px;color:#000;">Hawks Cay - S…</div>
<div class="t" style="left:621px;top:334px;font-size:10.5px;line-height:20px;color:#000;">Thu</div>
<div class="t" style="left:656px;top:334px;font-size:11.5px;line-height:20px;color:#000;">18/05/2017</div>
<div class="t" style="left:724px;top:334px;font-size:10.5px;line-height:20px;color:#000;">Sat</div>
<div class="t" style="left:759px;top:334px;font-size:11.5px;line-height:20px;color:#000;">20/05/2017</div>
<div class="t" style="left:827px;top:334px;font-size:10.5px;line-height:20px;color:#000;">Get A Bed</div>
<div class="t" style="left:615px;width:400px;text-align:right;top:334px;font-size:11.5px;line-height:20px;color:#000;">588.79</div>
<div class="t" style="left:670px;width:400px;text-align:right;top:334px;font-size:11.5px;line-height:20px;color:#000;">294.40</div>
<div class="t" style="left:735px;width:400px;text-align:right;top:334px;font-size:11.5px;line-height:20px;color:#000;">588.79</div>
<div class="t" style="left:790px;width:400px;text-align:right;top:334px;font-size:11.5px;line-height:20px;color:#000;">0.00</div>
<div class="t" style="left:1219px;top:334px;font-size:10.5px;line-height:20px;color:#000;">XML</div>
<div class="t" style="left:221px;top:349px;font-size:10.5px;line-height:20px;color:#000;">Duck Key - …</div>
<div class="t" style="left:296px;top:349px;font-size:10.5px;line-height:20px;color:#000;">Hawks Cay Island Re…</div>
<div class="t" style="left:416px;top:349px;font-size:10.5px;line-height:20px;color:#000;">4star</div>
<div class="t" style="left:456px;top:349px;font-size:10.5px;line-height:20px;color:#000;">Room Only</div>
<div class="t" style="left:531px;top:349px;font-size:10.5px;line-height:20px;color:#000;">Hawks Cay - H…</div>
<div class="t" style="left:621px;top:349px;font-size:10.5px;line-height:20px;color:#000;">Thu</div>
<div class="t" style="left:656px;top:349px;font-size:11.5px;line-height:20px;color:#000;">18/05/2017</div>
<div class="t" style="left:724px;top:349px;font-size:10.5px;line-height:20px;color:#000;">Sat</div>
<div class="t" style="left:759px;top:349px;font-size:11.5px;line-height:20px;color:#000;">20/05/2017</div>
<div class="t" style="left:827px;top:349px;font-size:10.5px;line-height:20px;color:#000;">Bonotel</div>
<div class="t" style="left:615px;width:400px;text-align:right;top:349px;font-size:11.5px;line-height:20px;color:#000;">600.10</div>
<div class="t" style="left:670px;width:400px;text-align:right;top:349px;font-size:11.5px;line-height:20px;color:#000;">300.05</div>
<div class="t" style="left:735px;width:400px;text-align:right;top:349px;font-size:11.5px;line-height:20px;color:#000;">600.10</div>
<div class="t" style="left:790px;width:400px;text-align:right;top:349px;font-size:11.5px;line-height:20px;color:#000;">0.00</div>
<div class="t" style="left:1219px;top:349px;font-size:10.5px;line-height:20px;color:#000;">XML</div>
<div class="t" style="left:221px;top:364px;font-size:10.5px;line-height:20px;color:#000;">Duck Key - …</div>
<div class="t" style="left:296px;top:364px;font-size:10.5px;line-height:20px;color:#000;">Hawks Cay Island Re…</div>
<div class="t" style="left:416px;top:364px;font-size:10.5px;line-height:20px;color:#000;">4star</div>
<div class="t" style="left:456px;top:364px;font-size:10.5px;line-height:20px;color:#000;">Room Only</div>
<div class="t" style="left:531px;top:364px;font-size:10.5px;line-height:20px;color:#000;">Hawks Cay - H…</div>
<div class="t" style="left:621px;top:364px;font-size:10.5px;line-height:20px;color:#000;">Thu</div>
<div class="t" style="left:656px;top:364px;font-size:11.5px;line-height:20px;color:#000;">18/05/2017</div>
<div class="t" style="left:724px;top:364px;font-size:10.5px;line-height:20px;color:#000;">Sat</div>
<div class="t" style="left:759px;top:364px;font-size:11.5px;line-height:20px;color:#000;">20/05/2017</div>
<div class="t" style="left:827px;top:364px;font-size:10.5px;line-height:20px;color:#000;">Bonotel</div>
<div class="t" style="left:615px;width:400px;text-align:right;top:364px;font-size:11.5px;line-height:20px;color:#000;">600.10</div>
<div class="t" style="left:670px;width:400px;text-align:right;top:364px;font-size:11.5px;line-height:20px;color:#000;">300.05</div>
<div class="t" style="left:735px;width:400px;text-align:right;top:364px;font-size:11.5px;line-height:20px;color:#000;">600.10</div>
<div class="t" style="left:790px;width:400px;text-align:right;top:364px;font-size:11.5px;line-height:20px;color:#000;">0.00</div>
<div class="t" style="left:1219px;top:364px;font-size:10.5px;line-height:20px;color:#000;">XML</div>
<div class="t" style="left:221px;top:379px;font-size:10.5px;line-height:20px;color:#000;">Duck Key - …</div>
<div class="t" style="left:296px;top:379px;font-size:10.5px;line-height:20px;color:#000;">Hawks Cay Island Re…</div>
<div class="t" style="left:416px;top:379px;font-size:10.5px;line-height:20px;color:#000;">4star</div>
<div class="t" style="left:456px;top:379px;font-size:10.5px;line-height:20px;color:#000;">Room Only</div>
<div class="t" style="left:531px;top:379px;font-size:10.5px;line-height:20px;color:#000;">Hawks Cay - M…</div>
<div class="t" style="left:621px;top:379px;font-size:10.5px;line-height:20px;color:#000;">Thu</div>
<div class="t" style="left:656px;top:379px;font-size:11.5px;line-height:20px;color:#000;">18/05/2017</div>
<div class="t" style="left:724px;top:379px;font-size:10.5px;line-height:20px;color:#000;">Sat</div>
<div class="t" style="left:759px;top:379px;font-size:11.5px;line-height:20px;color:#000;">20/05/2017</div>
<div class="t" style="left:827px;top:379px;font-size:10.5px;line-height:20px;color:#000;">Bonotel</div>
<div class="t" style="left:615px;width:400px;text-align:right;top:379px;font-size:11.5px;line-height:20px;color:#000;">633.61</div>
<div class="t" style="left:670px;width:400px;text-align:right;top:379px;font-size:11.5px;line-height:20px;color:#000;">316.81</div>
<div class="t" style="left:735px;width:400px;text-align:right;top:379px;font-size:11.5px;line-height:20px;color:#000;">633.61</div>
<div class="t" style="left:790px;width:400px;text-align:right;top:379px;font-size:11.5px;line-height:20px;color:#000;">0.00</div>
<div class="t" style="left:1219px;top:379px;font-size:10.5px;line-height:20px;color:#000;">XML</div>
<div class="t" style="left:221px;top:394px;font-size:10.5px;line-height:20px;color:#000;">Duck Key - …</div>
<div class="t" style="left:296px;top:394px;font-size:10.5px;line-height:20px;color:#000;">Hawks Cay Island Re…</div>
<div class="t" style="left:416px;top:394px;font-size:10.5px;line-height:20px;color:#000;">4star</div>
<div class="t" style="left:456px;top:394px;font-size:10.5px;line-height:20px;color:#000;">Room Only</div>
<div class="t" style="left:531px;top:394px;font-size:10.5px;line-height:20px;color:#000;">Hawks Cay - M…</div>
<div class="t" style="left:621px;top:394px;font-size:10.5px;line-height:20px;color:#000;">Thu</div>
<div class="t" style="left:656px;top:394px;font-size:11.5px;line-height:20px;color:#000;">18/05/2017</div>
<div class="t" style="left:724px;top:394px;font-size:10.5px;line-height:20px;color:#000;">Sat</div>
<div class="t" style="left:759px;top:394px;font-size:11.5px;line-height:20px;color:#000;">20/05/2017</div>
<div class="t" style="left:827px;top:394px;font-size:10.5px;line-height:20px;color:#000;">Bonotel</div>
<div class="t" style="left:615px;width:400px;text-align:right;top:394px;font-size:11.5px;line-height:20px;color:#000;">633.61</div>
<div class="t" style="left:670px;width:400px;text-align:right;top:394px;font-size:11.5px;line-height:20px;color:#000;">316.81</div>
<div class="t" style="left:735px;width:400px;text-align:right;top:394px;font-size:11.5px;line-height:20px;color:#000;">633.61</div>
<div class="t" style="left:790px;width:400px;text-align:right;top:394px;font-size:11.5px;line-height:20px;color:#000;">0.00</div>
<div class="t" style="left:1219px;top:394px;font-size:10.5px;line-height:20px;color:#000;">XML</div>
<div class="t" style="left:221px;top:409px;font-size:10.5px;line-height:20px;color:#000;">Duck Key - …</div>
<div class="t" style="left:296px;top:409px;font-size:10.5px;line-height:20px;color:#000;">Hawks Cay Island Re…</div>
<div class="t" style="left:416px;top:409px;font-size:10.5px;line-height:20px;color:#000;">4.0</div>
<div class="t" style="left:456px;top:409px;font-size:10.5px;line-height:20px;color:#000;">Room Only</div>
<div class="t" style="left:531px;top:409px;font-size:10.5px;line-height:20px;color:#000;">Hawks Cay - H…</div>
<div class="t" style="left:621px;top:409px;font-size:10.5px;line-height:20px;color:#000;">Thu</div>
<div class="t" style="left:656px;top:409px;font-size:11.5px;line-height:20px;color:#000;">18/05/2017</div>
<div class="t" style="left:724px;top:409px;font-size:10.5px;line-height:20px;color:#000;">Sat</div>
<div class="t" style="left:759px;top:409px;font-size:11.5px;line-height:20px;color:#000;">20/05/2017</div>
<div class="t" style="left:827px;top:409px;font-size:10.5px;line-height:20px;color:#000;">Get A Bed</div>
<div class="t" style="left:615px;width:400px;text-align:right;top:409px;font-size:11.5px;line-height:20px;color:#000;">643.57</div>
<div class="t" style="left:670px;width:400px;text-align:right;top:409px;font-size:11.5px;line-height:20px;color:#000;">321.79</div>
<div class="t" style="left:735px;width:400px;text-align:right;top:409px;font-size:11.5px;line-height:20px;color:#000;">643.57</div>
<div class="t" style="left:790px;width:400px;text-align:right;top:409px;font-size:11.5px;line-height:20px;color:#000;">0.00</div>
<div class="t" style="left:1219px;top:409px;font-size:10.5px;line-height:20px;color:#000;">XML</div>
<div class="t" style="left:221px;top:424px;font-size:10.5px;line-height:20px;color:#000;">Duck Key - …</div>
<div class="t" style="left:296px;top:424px;font-size:10.5px;line-height:20px;color:#000;">Hawks Cay Island Re…</div>
<div class="t" style="left:416px;top:424px;font-size:10.5px;line-height:20px;color:#000;">4.0</div>
<div class="t" style="left:456px;top:424px;font-size:10.5px;line-height:20px;color:#000;">Room Only</div>
<div class="t" style="left:531px;top:424px;font-size:10.5px;line-height:20px;color:#000;">Hawks Cay - H…</div>
<div class="t" style="left:621px;top:424px;font-size:10.5px;line-height:20px;color:#000;">Thu</div>
<div class="t" style="left:656px;top:424px;font-size:11.5px;line-height:20px;color:#000;">18/05/2017</div>
<div class="t" style="left:724px;top:424px;font-size:10.5px;line-height:20px;color:#000;">Sat</div>
<div class="t" style="left:759px;top:424px;font-size:11.5px;line-height:20px;color:#000;">20/05/2017</div>
<div class="t" style="left:827px;top:424px;font-size:10.5px;line-height:20px;color:#000;">Get A Bed</div>
<div class="t" style="left:615px;width:400px;text-align:right;top:424px;font-size:11.5px;line-height:20px;color:#000;">643.57</div>
<div class="t" style="left:670px;width:400px;text-align:right;top:424px;font-size:11.5px;line-height:20px;color:#000;">321.79</div>
<div class="t" style="left:735px;width:400px;text-align:right;top:424px;font-size:11.5px;line-height:20px;color:#000;">643.57</div>
<div class="t" style="left:790px;width:400px;text-align:right;top:424px;font-size:11.5px;line-height:20px;color:#000;">0.00</div>
<div class="t" style="left:1219px;top:424px;font-size:10.5px;line-height:20px;color:#000;">XML</div>
<div class="t" style="left:221px;top:439px;font-size:10.5px;line-height:20px;color:#000;">Duck Key - …</div>
<div class="t" style="left:296px;top:439px;font-size:10.5px;line-height:20px;color:#000;">Hawks Cay Island Re…</div>
<div class="t" style="left:416px;top:439px;font-size:10.5px;line-height:20px;color:#000;">4.0</div>
<div class="t" style="left:456px;top:439px;font-size:10.5px;line-height:20px;color:#000;">Room Only</div>
<div class="t" style="left:531px;top:439px;font-size:10.5px;line-height:20px;color:#000;">Hawks Cay - M…</div>
<div class="t" style="left:621px;top:439px;font-size:10.5px;line-height:20px;color:#000;">Thu</div>
<div class="t" style="left:656px;top:439px;font-size:11.5px;line-height:20px;color:#000;">18/05/2017</div>
<div class="t" style="left:724px;top:439px;font-size:10.5px;line-height:20px;color:#000;">Sat</div>
<div class="t" style="left:759px;top:439px;font-size:11.5px;line-height:20px;color:#000;">20/05/2017</div>
<div class="t" style="left:827px;top:439px;font-size:10.5px;line-height:20px;color:#000;">Get A Bed</div>
<div class="t" style="left:615px;width:400px;text-align:right;top:439px;font-size:11.5px;line-height:20px;color:#000;">679.52</div>
<div class="t" style="left:670px;width:400px;text-align:right;top:439px;font-size:11.5px;line-height:20px;color:#000;">339.76</div>
<div class="t" style="left:735px;width:400px;text-align:right;top:439px;font-size:11.5px;line-height:20px;color:#000;">679.52</div>
<div class="t" style="left:790px;width:400px;text-align:right;top:439px;font-size:11.5px;line-height:20px;color:#000;">0.00</div>
<div class="t" style="left:1219px;top:439px;font-size:10.5px;line-height:20px;color:#000;">XML</div>
<div class="t" style="left:221px;top:454px;font-size:10.5px;line-height:20px;color:#000;">Duck Key - …</div>
<div class="t" style="left:296px;top:454px;font-size:10.5px;line-height:20px;color:#000;">Hawks Cay Island Re…</div>
<div class="t" style="left:416px;top:454px;font-size:10.5px;line-height:20px;color:#000;">4.0</div>
<div class="t" style="left:456px;top:454px;font-size:10.5px;line-height:20px;color:#000;">Room Only</div>
<div class="t" style="left:531px;top:454px;font-size:10.5px;line-height:20px;color:#000;">Hawks Cay - M…</div>
<div class="t" style="left:621px;top:454px;font-size:10.5px;line-height:20px;color:#000;">Thu</div>
<div class="t" style="left:656px;top:454px;font-size:11.5px;line-height:20px;color:#000;">18/05/2017</div>
<div class="t" style="left:724px;top:454px;font-size:10.5px;line-height:20px;color:#000;">Sat</div>
<div class="t" style="left:759px;top:454px;font-size:11.5px;line-height:20px;color:#000;">20/05/2017</div>
<div class="t" style="left:827px;top:454px;font-size:10.5px;line-height:20px;color:#000;">Get A Bed</div>
<div class="t" style="left:615px;width:400px;text-align:right;top:454px;font-size:11.5px;line-height:20px;color:#000;">679.52</div>
<div class="t" style="left:670px;width:400px;text-align:right;top:454px;font-size:11.5px;line-height:20px;color:#000;">339.76</div>
<div class="t" style="left:735px;width:400px;text-align:right;top:454px;font-size:11.5px;line-height:20px;color:#000;">679.52</div>
<div class="t" style="left:790px;width:400px;text-align:right;top:454px;font-size:11.5px;line-height:20px;color:#000;">0.00</div>
<div class="t" style="left:1219px;top:454px;font-size:10.5px;line-height:20px;color:#000;">XML</div>
<div class="t" style="left:221px;top:469px;font-size:10.5px;line-height:20px;color:#000;">Duck Key - …</div>
<div class="t" style="left:296px;top:469px;font-size:10.5px;line-height:20px;color:#000;">Hawks Cay Island Re…</div>
<div class="t" style="left:416px;top:469px;font-size:10.5px;line-height:20px;color:#000;">4star</div>
<div class="t" style="left:456px;top:469px;font-size:10.5px;line-height:20px;color:#000;">Room Only</div>
<div class="t" style="left:531px;top:469px;font-size:10.5px;line-height:20px;color:#000;">Hawks Cay - H…</div>
<div class="t" style="left:621px;top:469px;font-size:10.5px;line-height:20px;color:#000;">Thu</div>
<div class="t" style="left:656px;top:469px;font-size:11.5px;line-height:20px;color:#000;">18/05/2017</div>
<div class="t" style="left:724px;top:469px;font-size:10.5px;line-height:20px;color:#000;">Sat</div>
<div class="t" style="left:759px;top:469px;font-size:11.5px;line-height:20px;color:#000;">20/05/2017</div>
<div class="t" style="left:827px;top:469px;font-size:10.5px;line-height:20px;color:#000;">Bonotel</div>
<div class="t" style="left:615px;width:400px;text-align:right;top:469px;font-size:11.5px;line-height:20px;color:#000;">732.56</div>
<div class="t" style="left:670px;width:400px;text-align:right;top:469px;font-size:11.5px;line-height:20px;color:#000;">366.28</div>
<div class="t" style="left:735px;width:400px;text-align:right;top:469px;font-size:11.5px;line-height:20px;color:#000;">732.56</div>
<div class="t" style="left:790px;width:400px;text-align:right;top:469px;font-size:11.5px;line-height:20px;color:#000;">0.00</div>
<div class="t" style="left:1219px;top:469px;font-size:10.5px;line-height:20px;color:#000;">XML</div>
<div class="t" style="left:221px;top:484px;font-size:10.5px;line-height:20px;color:#000;">Duck Key - …</div>
<div class="t" style="left:296px;top:484px;font-size:10.5px;line-height:20px;color:#000;">Hawks Cay Island Re…</div>
<div class="t" style="left:416px;top:484px;font-size:10.5px;line-height:20px;color:#000;">4star</div>
<div class="t" style="left:456px;top:484px;font-size:10.5px;line-height:20px;color:#000;">Room Only</div>
<div class="t" style="left:531px;top:484px;font-size:10.5px;line-height:20px;color:#000;">Hawks Cay - H…</div>
<div class="t" style="left:621px;top:484px;font-size:10.5px;line-height:20px;color:#000;">Thu</div>
<div class="t" style="left:656px;top:484px;font-size:11.5px;line-height:20px;color:#000;">18/05/2017</div>
<div class="t" style="left:724px;top:484px;font-size:10.5px;line-height:20px;color:#000;">Sat</div>
<div class="t" style="left:759px;top:484px;font-size:11.5px;line-height:20px;color:#000;">20/05/2017</div>
<div class="t" style="left:827px;top:484px;font-size:10.5px;line-height:20px;color:#000;">Bonotel</div>
<div class="t" style="left:615px;width:400px;text-align:right;top:484px;font-size:11.5px;line-height:20px;color:#000;">732.56</div>
<div class="t" style="left:670px;width:400px;text-align:right;top:484px;font-size:11.5px;line-height:20px;color:#000;">366.28</div>
<div class="t" style="left:735px;width:400px;text-align:right;top:484px;font-size:11.5px;line-height:20px;color:#000;">732.56</div>
<div class="t" style="left:790px;width:400px;text-align:right;top:484px;font-size:11.5px;line-height:20px;color:#000;">0.00</div>
<div class="t" style="left:1219px;top:484px;font-size:10.5px;line-height:20px;color:#000;">XML</div>
<div class="t" style="left:221px;top:499px;font-size:10.5px;line-height:20px;color:#000;">Duck Key - …</div>
<div class="t" style="left:296px;top:499px;font-size:10.5px;line-height:20px;color:#000;">Hawks Cay Island Re…</div>
<div class="t" style="left:416px;top:499px;font-size:10.5px;line-height:20px;color:#000;">4.0</div>
<div class="t" style="left:456px;top:499px;font-size:10.5px;line-height:20px;color:#000;">Room Only</div>
<div class="t" style="left:531px;top:499px;font-size:10.5px;line-height:20px;color:#000;">Hawks Cay - H…</div>
<div class="t" style="left:621px;top:499px;font-size:10.5px;line-height:20px;color:#000;">Thu</div>
<div class="t" style="left:656px;top:499px;font-size:11.5px;line-height:20px;color:#000;">18/05/2017</div>
<div class="t" style="left:724px;top:499px;font-size:10.5px;line-height:20px;color:#000;">Sat</div>
<div class="t" style="left:759px;top:499px;font-size:11.5px;line-height:20px;color:#000;">20/05/2017</div>
<div class="t" style="left:827px;top:499px;font-size:10.5px;line-height:20px;color:#000;">Get A Bed</div>
<div class="t" style="left:615px;width:400px;text-align:right;top:499px;font-size:11.5px;line-height:20px;color:#000;">785.64</div>
<div class="t" style="left:670px;width:400px;text-align:right;top:499px;font-size:11.5px;line-height:20px;color:#000;">392.82</div>
<div class="t" style="left:735px;width:400px;text-align:right;top:499px;font-size:11.5px;line-height:20px;color:#000;">785.64</div>
<div class="t" style="left:790px;width:400px;text-align:right;top:499px;font-size:11.5px;line-height:20px;color:#000;">0.00</div>
<div class="t" style="left:1219px;top:499px;font-size:10.5px;line-height:20px;color:#000;">XML</div>
<div class="t" style="left:221px;top:514px;font-size:10.5px;line-height:20px;color:#000;">Duck Key - …</div>
<div class="t" style="left:296px;top:514px;font-size:10.5px;line-height:20px;color:#000;">Hawks Cay Island Re…</div>
<div class="t" style="left:416px;top:514px;font-size:10.5px;line-height:20px;color:#000;">4.0</div>
<div class="t" style="left:456px;top:514px;font-size:10.5px;line-height:20px;color:#000;">Room Only</div>
<div class="t" style="left:531px;top:514px;font-size:10.5px;line-height:20px;color:#000;">Hawks Cay - H…</div>
<div class="t" style="left:621px;top:514px;font-size:10.5px;line-height:20px;color:#000;">Thu</div>
<div class="t" style="left:656px;top:514px;font-size:11.5px;line-height:20px;color:#000;">18/05/2017</div>
<div class="t" style="left:724px;top:514px;font-size:10.5px;line-height:20px;color:#000;">Sat</div>
<div class="t" style="left:759px;top:514px;font-size:11.5px;line-height:20px;color:#000;">20/05/2017</div>
<div class="t" style="left:827px;top:514px;font-size:10.5px;line-height:20px;color:#000;">Get A Bed</div>
<div class="t" style="left:615px;width:400px;text-align:right;top:514px;font-size:11.5px;line-height:20px;color:#000;">785.64</div>
<div class="t" style="left:670px;width:400px;text-align:right;top:514px;font-size:11.5px;line-height:20px;color:#000;">392.82</div>
<div class="t" style="left:735px;width:400px;text-align:right;top:514px;font-size:11.5px;line-height:20px;color:#000;">785.64</div>
<div class="t" style="left:790px;width:400px;text-align:right;top:514px;font-size:11.5px;line-height:20px;color:#000;">0.00</div>
<div class="t" style="left:1219px;top:514px;font-size:10.5px;line-height:20px;color:#000;">XML</div>
<div class="t" style="left:222px;top:779px;font-size:11px;line-height:20px;color:#000;">First portion: 2.4 sec, total search time: 2.4 sec</div>
<div style="left:1560px;top:778px;width:23px;height:22px;background:#d4d0c8;border-top:1px solid #fff;border-left:1px solid #fff;border-right:1px solid #404040;border-bottom:1px solid #404040;box-sizing:border-box"></div>
<div style="left:1561px;top:779px;width:21px;height:20px;border-right:1px solid #808080;border-bottom:1px solid #808080;box-sizing:border-box"></div>
<div class="t" style="left:1371px;width:400px;text-align:center;top:779px;font-size:17px;line-height:20px;color:#0a50a8;font-weight:bold;font-family:'Liberation Serif',serif">i</div>
<div style="left:215px;top:805px;width:1378px;height:1px;background:#808080"></div>
<div style="left:215px;top:806px;width:52px;height:17px;background:#d4d0c8"></div>
<div style="left:267px;top:806px;width:41px;height:17px;background:#d4d0c8"></div>
<div style="left:308px;top:806px;width:63px;height:17px;background:#c0ffc0"></div>
<div style="left:371px;top:806px;width:114px;height:17px;background:#c0c0ff"></div>
<div style="left:486px;top:804px;width:164px;height:1px;background:#f0e8f0"></div>
<div style="left:486px;top:805px;width:164px;height:17px;background:#0a880a;border-radius:0 0 2px 2px"></div>
<div style="left:650px;top:806px;width:127px;height:17px;background:#c0c0ff"></div>
<div style="left:777px;top:806px;width:65px;height:17px;background:#c0ffc0"></div>
<div style="left:842px;top:806px;width:96px;height:17px;background:#d4d0c8"></div>
<div style="left:267px;top:806px;width:1px;height:17px;background:#808080"></div>
<div class="t" style="left:218px;top:804px;font-size:10.5px;line-height:20px;color:#000;">Summary</div>
<div style="left:308px;top:806px;width:1px;height:17px;background:#808080"></div>
<div class="t" style="left:270px;top:804px;font-size:10.5px;line-height:20px;color:#000;">Search</div>
<div style="left:371px;top:806px;width:1px;height:17px;background:#808080"></div>
<div class="t" style="left:311px;top:804px;font-size:10.5px;line-height:20px;color:#000;">Acc 2A MIA</div>
<div style="left:485px;top:806px;width:1px;height:17px;background:#808080"></div>
<div class="t" style="left:374px;top:804px;font-size:10.5px;line-height:20px;color:#000;">Acc 2A Key Largo (FL)</div>
<div style="left:650px;top:806px;width:1px;height:17px;background:#808080"></div>
<div class="t" style="left:488px;top:804px;font-size:10.5px;line-height:20px;color:#fff;">Acc 2A Duck Key - Marathon (FL)</div>
<div style="left:777px;top:806px;width:1px;height:17px;background:#808080"></div>
<div class="t" style="left:653px;top:804px;font-size:10.5px;line-height:20px;color:#000;">Acc 2A Marco Island (FL)</div>
<div style="left:842px;top:806px;width:1px;height:17px;background:#808080"></div>
<div class="t" style="left:780px;top:804px;font-size:10.5px;line-height:20px;color:#000;">Acc 2A CUN</div>
<div style="left:938px;top:806px;width:1px;height:17px;background:#808080"></div>
<div class="t" style="left:845px;top:804px;font-size:10.5px;line-height:20px;color:#000;">Financial Summary</div>
<div class="t" style="left:781px;top:828px;font-size:10.7px;line-height:20px;color:#000;">User: 338 - Robert Comer</div>
<div class="t" style="left:916px;top:828px;font-size:10.7px;line-height:20px;color:#000;">Retailer: 'Ocean-Florida'</div>
<div class="t" style="left:1042px;top:828px;font-size:10.7px;line-height:20px;color:#000;">Client: none</div>
<div class="t" style="left:1191px;width:400px;text-align:right;top:828px;font-size:10.6px;line-height:20px;color:#000;">17:12 GMT</div>
<div style="left:0px;top:858px;width:1600px;height:2px;background:#404040"></div>
</body></html>
